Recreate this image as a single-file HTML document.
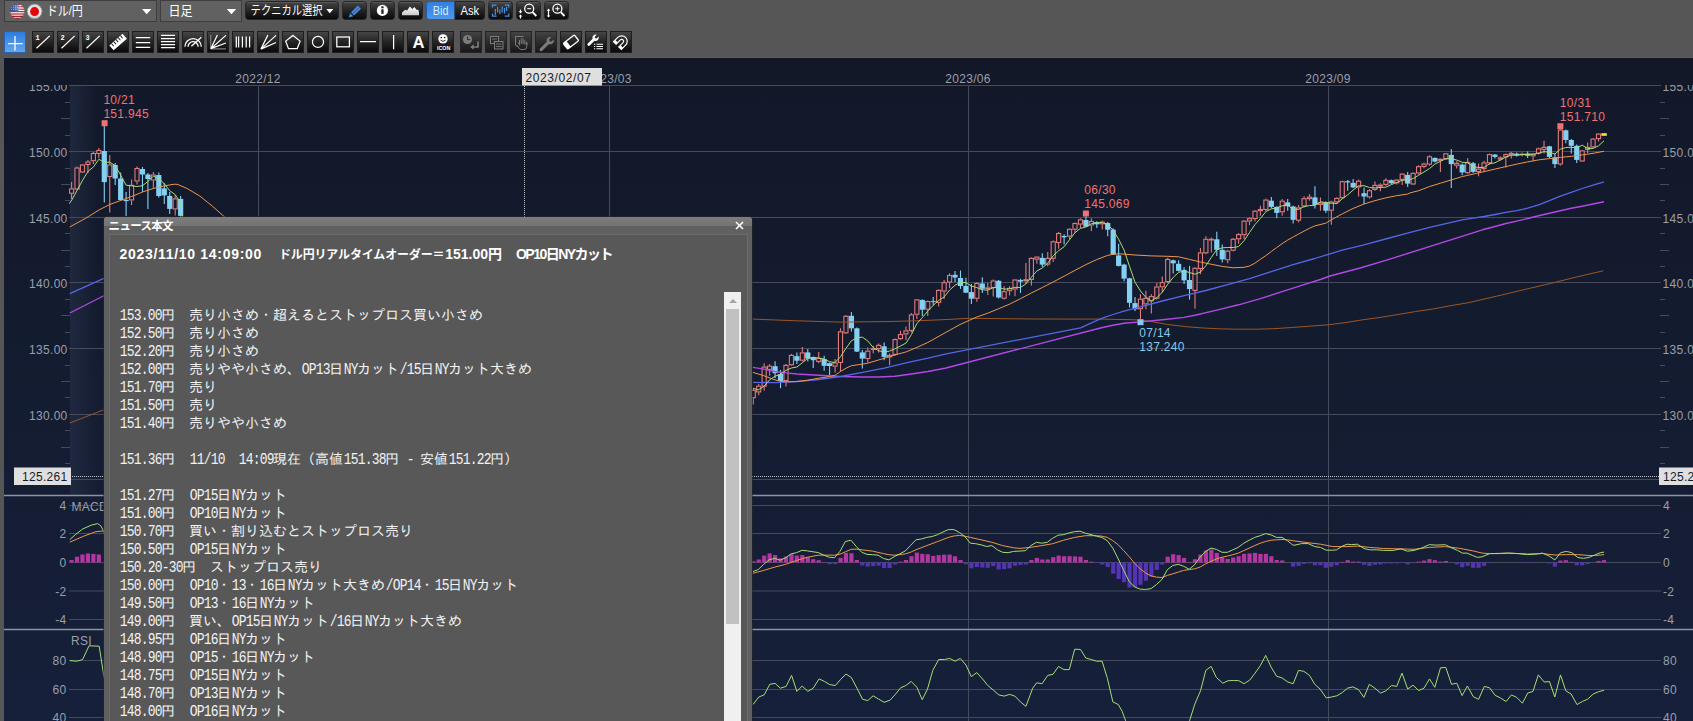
<!DOCTYPE html>
<html lang="ja"><head><meta charset="utf-8"><title>ドル/円 チャート</title>
<style>
html,body{margin:0;padding:0}
body{width:1693px;height:721px;overflow:hidden;background:#565656;position:relative;font-family:"Liberation Sans","Noto Sans CJK JP",sans-serif}
#chartbg{position:absolute;left:4px;top:58px;width:1689px;height:663px;background:linear-gradient(#121828,#16203a)}
#topline{position:absolute;left:4px;top:56.5px;width:1689px;height:1.5px;background:#5c5e5e}
#chart{position:absolute;left:0;top:0}
.ax{font-family:"Liberation Sans",sans-serif;font-size:12px;letter-spacing:.3px}
#pop{position:absolute;left:104px;top:217px;width:648px;height:520px;background:#606060;border-radius:3px 3px 0 0;box-shadow:0 0 0 1px rgba(40,40,40,.55)}
#pop .tb{position:absolute;left:0;top:0;width:100%;height:9px;background:linear-gradient(#7d7d7d,#737373);border-radius:3px 3px 0 0}
#pop .tt{position:absolute;left:0;top:0;font-size:11.5px;font-weight:bold;fill:#fff}
#pop .x{position:absolute;left:631px;top:4px}
#pop .in{position:absolute;left:5px;top:17px;width:639px;height:520px;background:#585858;border:1px solid #6a6a6a;box-sizing:border-box}
#pop .hd{position:absolute;left:15px;top:29px;font-weight:bold;fill:#fff}
#pop .h1{font-size:14px}#pop .h1,#pop .h2{font-family:"Liberation Sans","Noto Sans CJK JP",sans-serif}#pop .h2{font-size:12px}
#pop .bd{position:absolute;left:15px;top:89.5px;color:#f2f2f2;font-family:"Liberation Mono","IPAGothic",monospace;font-size:14px}
#pop .ln{height:18px;line-height:18px;white-space:pre}
#pop .a{font-size:13px;letter-spacing:-.8px;display:inline-block;transform:translateX(.7px) scaleY(1.2);transform-origin:0 77%}
#sb{position:absolute;left:620px;top:75px;width:17px;height:450px;background:#f0f0f0}
#sb .th{position:absolute;left:1.7px;top:17px;width:13.4px;height:314.5px;background:#c1c1c1}
#sb .up{position:absolute;left:4.5px;top:6.5px;width:0;height:0;border-left:4px solid transparent;border-right:4px solid transparent;border-bottom:4px solid #a3a3a3}
</style></head><body>
<svg id="tbar" width="1693" height="58" viewBox="0 0 1693 58" style="position:absolute;left:0;top:0">
<defs>
<linearGradient id="gD" x1="0" y1="0" x2="0" y2="1"><stop offset="0" stop-color="#474747"/><stop offset=".5" stop-color="#242424"/><stop offset="1" stop-color="#080808"/></linearGradient>
<linearGradient id="gX" x1="0" y1="0" x2="0" y2="1"><stop offset="0" stop-color="#444"/><stop offset=".5" stop-color="#2c2c2c"/><stop offset="1" stop-color="#171717"/></linearGradient>
<linearGradient id="gB" x1="0" y1="0" x2="0" y2="1"><stop offset="0" stop-color="#2a7be0"/><stop offset="1" stop-color="#66a6ea"/></linearGradient>
<linearGradient id="gB2" x1="0" y1="0" x2="0" y2="1"><stop offset="0" stop-color="#2f7fe2"/><stop offset="1" stop-color="#4f97e8"/></linearGradient>
<linearGradient id="gJ" x1="0" y1="0" x2="0" y2="1"><stop offset="0" stop-color="#d6d6d6"/><stop offset=".55" stop-color="#f4f4f4"/><stop offset="1" stop-color="#c4c4c4"/></linearGradient>
<linearGradient id="gM" x1="0" y1="0" x2="0" y2="1"><stop offset="0" stop-color="#fff"/><stop offset="1" stop-color="#c8c8c8"/></linearGradient>
<radialGradient id="gU" cx=".5" cy=".25" r=".7"><stop offset="0" stop-color="#fff" stop-opacity=".35"/><stop offset=".55" stop-color="#fff" stop-opacity="0"/><stop offset="1" stop-color="#000" stop-opacity=".38"/></radialGradient>
<clipPath id="cU"><circle cx="17.3" cy="11.4" r="7.6"/></clipPath>
</defs>
<rect x="4.5" y="0.5" width="152" height="21" fill="#616161" stroke="#3e3e3e"/>
<rect x="160.5" y="0.5" width="81" height="21" fill="#616161" stroke="#3e3e3e"/>
<path d="M142 9h9.4l-4.7 5.2z" fill="#fff"/><path d="M226.8 9h9.4l-4.7 5.2z" fill="#fff"/>
<g clip-path="url(#cU)"><rect x="9" y="3" width="17" height="17" fill="#fff"/>
<rect x="9" y="3.80" width="17" height="1.2" fill="#c01828"/>
<rect x="9" y="6.20" width="17" height="1.2" fill="#c01828"/>
<rect x="9" y="8.60" width="17" height="1.2" fill="#c01828"/>
<rect x="9" y="11.00" width="17" height="1.2" fill="#c01828"/>
<rect x="9" y="13.40" width="17" height="1.2" fill="#c01828"/>
<rect x="9" y="15.80" width="17" height="1.2" fill="#c01828"/>
<rect x="9" y="18.20" width="17" height="1.2" fill="#c01828"/>
<rect x="9" y="3" width="9.5" height="8.4" fill="#34509c"/>
<circle cx="11.5" cy="5.2" r=".45" fill="#dfe6f5"/>
<circle cx="13.5" cy="5.2" r=".45" fill="#dfe6f5"/>
<circle cx="15.5" cy="5.2" r=".45" fill="#dfe6f5"/>
<circle cx="17.3" cy="5.2" r=".45" fill="#dfe6f5"/>
<circle cx="11.5" cy="7.2" r=".45" fill="#dfe6f5"/>
<circle cx="13.5" cy="7.2" r=".45" fill="#dfe6f5"/>
<circle cx="15.5" cy="7.2" r=".45" fill="#dfe6f5"/>
<circle cx="17.3" cy="7.2" r=".45" fill="#dfe6f5"/>
<circle cx="11.5" cy="9.2" r=".45" fill="#dfe6f5"/>
<circle cx="13.5" cy="9.2" r=".45" fill="#dfe6f5"/>
<circle cx="15.5" cy="9.2" r=".45" fill="#dfe6f5"/>
<circle cx="17.3" cy="9.2" r=".45" fill="#dfe6f5"/>
<circle cx="17.3" cy="11.4" r="7.6" fill="url(#gU)"/></g><circle cx="17.3" cy="11.4" r="7.5" fill="none" stroke="#3a3a3a" stroke-opacity=".5" stroke-width=".7"/>
<circle cx="34.6" cy="11.4" r="7.4" fill="url(#gJ)" stroke="#8c8c8c" stroke-width=".9"/><circle cx="34.6" cy="11.6" r="4.5" fill="#e00808"/>
<text x="46.8" y="14.6" fill="#fff" style="font-family:'Liberation Sans','Noto Sans CJK JP',sans-serif;font-size:13px" textLength="36" lengthAdjust="spacingAndGlyphs">ドル/円</text>
<text x="168.4" y="14.6" fill="#fff" style="font-family:'Liberation Sans','Noto Sans CJK JP',sans-serif;font-size:13px" textLength="24" lengthAdjust="spacingAndGlyphs">日足</text>
<rect x="245.5" y="1.5" width="93.0" height="18.0" rx="3" fill="url(#gD)" stroke="#262626"/>
<line x1="247.3" y1="2.5" x2="336.7" y2="2.5" stroke="#6a6a6a" stroke-opacity=".55"/>
<text x="250.6" y="15.2" fill="#fff" style="font-family:'Liberation Sans','Noto Sans CJK JP',sans-serif;font-size:12.5px" textLength="72" lengthAdjust="spacingAndGlyphs">テクニカル選択</text>
<path d="M326.3 9h7l-3.5 4.2z" fill="#fff"/>
<rect x="342.5" y="1.5" width="24.0" height="18.0" rx="3" fill="url(#gD)" stroke="#262626"/>
<line x1="344.3" y1="2.5" x2="364.7" y2="2.5" stroke="#6a6a6a" stroke-opacity=".55"/>
<rect x="370.5" y="1.5" width="24.0" height="18.0" rx="3" fill="url(#gD)" stroke="#262626"/>
<line x1="372.3" y1="2.5" x2="392.7" y2="2.5" stroke="#6a6a6a" stroke-opacity=".55"/>
<rect x="398.5" y="1.5" width="24.0" height="18.0" rx="3" fill="url(#gD)" stroke="#262626"/>
<line x1="400.3" y1="2.5" x2="420.7" y2="2.5" stroke="#6a6a6a" stroke-opacity=".55"/>
<g fill="#4a8ee2"><path d="M351 12.400l6.900-6.800 3 3.100-6.900 6.800z"/><path d="M350.200 13.300l2.900 3-4.400 1.300z"/></g><path d="M352.600 13.900l6.900-6.800" stroke="#173a72" stroke-width=".8" fill="none"/>
<circle cx="382.4" cy="10.4" r="5.6" fill="#fff"/><rect x="381.3" y="9.3" width="2.3" height="4.6" fill="#222"/><rect x="381.3" y="6.3" width="2.3" height="2" fill="#222"/>
<path d="M402 15.200v-2.800l3.200-2.600 1.800.8 2.900-4.200 2.400 2.600 2-1.900 2.600 3 1.300-.5 .8 2.600v3z" fill="url(#gM)"/>
<path d="M429.5 1.5h25.5v18h-25.5a3 3 0 0 1-3-3v-12a3 3 0 0 1 3-3z" fill="url(#gB2)" stroke="#1f5db4"/>
<path d="M455 1.5h26.5a3 3 0 0 1 3 3v12a3 3 0 0 1-3 3h-26.5z" fill="url(#gD)" stroke="#262626"/>
<text x="432.8" y="15" fill="#d6ebff" style="font-family:'Liberation Sans','Noto Sans CJK JP',sans-serif;font-size:12px" textLength="15.6" lengthAdjust="spacingAndGlyphs">Bid</text>
<text x="460.5" y="15" fill="#fff" style="font-family:'Liberation Sans','Noto Sans CJK JP',sans-serif;font-size:12px" textLength="18.6" lengthAdjust="spacingAndGlyphs">Ask</text>
<rect x="488.5" y="1.5" width="24.0" height="18.0" rx="3" fill="url(#gD)" stroke="#262626"/>
<line x1="490.3" y1="2.5" x2="510.7" y2="2.5" stroke="#6a6a6a" stroke-opacity=".55"/>
<rect x="516.5" y="1.5" width="24.0" height="18.0" rx="3" fill="url(#gD)" stroke="#262626"/>
<line x1="518.3" y1="2.5" x2="538.7" y2="2.5" stroke="#6a6a6a" stroke-opacity=".55"/>
<rect x="544.5" y="1.5" width="24.0" height="18.0" rx="3" fill="url(#gD)" stroke="#262626"/>
<line x1="546.3" y1="2.5" x2="566.7" y2="2.5" stroke="#6a6a6a" stroke-opacity=".55"/>
<g stroke="#4a8fe2" fill="none" stroke-width="1.2"><path d="M492.5 7.5v-2.3h4M508.8 7.5v-2.3h-4M492.5 13.5v2.6h4M508.8 13.5v2.6h-4"/><path d="M495.3 9v6M497.6 7v5.5M499.9 9.5v4.5M502.2 6.5v6M504.5 8v5.5M506.6 7v4"/></g>
<g stroke="#fff" fill="none" stroke-width="1.3"><circle cx="529.2" cy="8.700" r="4.500"/><path d="M532.600 12.200l3.700 3.800" stroke-width="1.900"/><path d="M527.200 8.700h4" stroke-width="1"/></g>
<path d="M520.5 13.400l-1.900-2.200h1.300v-1.800h1.200v1.800h1.300zM520.500 14.400l1.900 2.200h-1.300v1.800h-1.200v-1.800h-1.300z" fill="#fff"/>
<g stroke="#fff" fill="none" stroke-width="1.3"><circle cx="557.4" cy="8.700" r="4.500"/><path d="M560.800 12.200l3.700 3.800" stroke-width="1.900"/><path d="M555.300 8.700h4.200M557.400 6.600v4.200" stroke-width="1"/></g>
<path d="M548.5 8.6l1.9 2.2h-1.3v4.6h1.3l-1.9 2.2-1.9-2.2h1.3v-4.6h-1.3z" fill="#fff"/>
<rect x="4.5" y="31.5" width="21" height="21.0" fill="url(#gB)" stroke="#2a62b4"/>
<rect x="32.5" y="31.5" width="21" height="21.0" fill="url(#gD)" stroke="#1e1e1e"/>
<rect x="57.5" y="31.5" width="21" height="21.0" fill="url(#gD)" stroke="#1e1e1e"/>
<rect x="82.5" y="31.5" width="21" height="21.0" fill="url(#gD)" stroke="#1e1e1e"/>
<rect x="107.5" y="31.5" width="21" height="21.0" fill="url(#gD)" stroke="#1e1e1e"/>
<rect x="132.5" y="31.5" width="21" height="21.0" fill="url(#gD)" stroke="#1e1e1e"/>
<rect x="157.5" y="31.5" width="21" height="21.0" fill="url(#gD)" stroke="#1e1e1e"/>
<rect x="182.5" y="31.5" width="21" height="21.0" fill="url(#gD)" stroke="#1e1e1e"/>
<rect x="207.5" y="31.5" width="21" height="21.0" fill="url(#gD)" stroke="#1e1e1e"/>
<rect x="232.5" y="31.5" width="21" height="21.0" fill="url(#gD)" stroke="#1e1e1e"/>
<rect x="257.5" y="31.5" width="21" height="21.0" fill="url(#gD)" stroke="#1e1e1e"/>
<rect x="282.5" y="31.5" width="21" height="21.0" fill="url(#gD)" stroke="#1e1e1e"/>
<rect x="307.5" y="31.5" width="21" height="21.0" fill="url(#gD)" stroke="#1e1e1e"/>
<rect x="332.5" y="31.5" width="21" height="21.0" fill="url(#gD)" stroke="#1e1e1e"/>
<rect x="357.5" y="31.5" width="21" height="21.0" fill="url(#gD)" stroke="#1e1e1e"/>
<rect x="382.5" y="31.5" width="21" height="21.0" fill="url(#gD)" stroke="#1e1e1e"/>
<rect x="407.5" y="31.5" width="21" height="21.0" fill="url(#gD)" stroke="#1e1e1e"/>
<rect x="432.5" y="31.5" width="21" height="21.0" fill="url(#gD)" stroke="#1e1e1e"/>
<rect x="460.5" y="31.5" width="21" height="21.0" fill="url(#gX)" stroke="#242424"/>
<rect x="485.5" y="31.5" width="21" height="21.0" fill="url(#gX)" stroke="#242424"/>
<rect x="510.5" y="31.5" width="21" height="21.0" fill="url(#gX)" stroke="#242424"/>
<rect x="535.5" y="31.5" width="21" height="21.0" fill="url(#gX)" stroke="#242424"/>
<rect x="560.5" y="31.5" width="21" height="21.0" fill="url(#gD)" stroke="#1e1e1e"/>
<rect x="585.5" y="31.5" width="21" height="21.0" fill="url(#gD)" stroke="#1e1e1e"/>
<rect x="610.5" y="31.5" width="21" height="21.0" fill="url(#gD)" stroke="#1e1e1e"/>
<path d="M8 43.6h14.6M15 36v14.5" stroke="#fff" fill="none" stroke-width="1.25" stroke-width="1.3"/>
<path d="M36.5 48.3l13.2-12.4" stroke="#fff" fill="none" stroke-width="1.25" stroke-width="1.5"/>
<text x="35.4" y="39.6" fill="#fff" style="font-family:'Liberation Mono',monospace;font-size:7px;font-weight:bold">1</text>
<path d="M61.5 48.3l13.2-12.4" stroke="#fff" fill="none" stroke-width="1.25" stroke-width="1.5"/>
<text x="60.4" y="39.6" fill="#fff" style="font-family:'Liberation Mono',monospace;font-size:7px;font-weight:bold">2</text>
<path d="M86.5 48.3l13.2-12.4" stroke="#fff" fill="none" stroke-width="1.25" stroke-width="1.5"/>
<text x="85.4" y="39.6" fill="#fff" style="font-family:'Liberation Mono',monospace;font-size:7px;font-weight:bold">3</text>
<g transform="translate(118.1 42.1) rotate(-41)"><rect x="-8.8" y="-3.3" width="17.6" height="6.6" fill="#fff"/><path d="M-6 -3.3v3.4M-3 -3.3v3.4M0 -3.3v3.4M3 -3.3v3.4M6 -3.3v3.4" stroke="#222" stroke-width="1"/></g>
<path d="M135.8 37.5h14.4M135.8 42.5h14.4M135.8 47.4h14.4" stroke="#fff" fill="none" stroke-width="1.25" stroke-width="1.3"/>
<path d="M161 35.4h14M161 38.5h14M161 41.6h14M161 44.6h14M161 47.6h14" stroke="#fff" fill="none" stroke-width="1.25" stroke-width="1.2"/>
<path d="M184.9 46.8a8.2 8.2 0 0 1 16.4 0M188 46.8a5.1 5.1 0 0 1 10.2 0M191.4 46.3l9.9-9" stroke="#fff" fill="none" stroke-width="1.25"/>
<path d="M210.8 35v13.9h15.2" stroke="#9a9a9a" fill="none" stroke-width="1"/><path d="M210.8 48.7l6.6-13.7M210.8 48.7l15.1-13.3M210.8 48.7l15.1-5.7" stroke="#fff" fill="none" stroke-width="1.25"/>
<path d="M236.3 36.4v11M238.6 36.4v11M242.4 36.4v11M246.2 36.4v11M249.6 36.4v11" stroke="#fff" fill="none" stroke-width="1.25" stroke-width="1.2"/>
<path d="M260.9 49.1l7-14.1M260.9 49.1l15.1-13.7M260.9 49.1l15.1-6.6" stroke="#fff" fill="none" stroke-width="1.25"/>
<path d="M293 35.4l7.1 5.7-2.9 7.6h-8.7l-2.8-7.6z" stroke="#fff" fill="none" stroke-width="1.25"/>
<circle cx="318" cy="41.9" r="5.55" stroke="#fff" fill="none" stroke-width="1.25"/>
<rect x="336.8" y="37" width="12.6" height="9.8" stroke="#fff" fill="none" stroke-width="1.25" stroke-width="1.3"/>
<path d="M360 41.5h16M393.6 35v14.2" stroke="#fff" fill="none" stroke-width="1.25" stroke-width="1.3"/>
<text x="412.4" y="48.3" fill="#fff" style="font-family:'Liberation Sans',sans-serif;font-size:16px;font-weight:bold" textLength="12" lengthAdjust="spacingAndGlyphs">A</text>
<circle cx="443" cy="38.9" r="4.7" fill="#fff"/><circle cx="441.3" cy="37.6" r=".8" fill="#111"/><circle cx="444.7" cy="37.6" r=".8" fill="#111"/><path d="M440.5 40.2q2.5 2.4 5 0" stroke="#111" fill="none" stroke-width=".9"/>
<text x="437" y="50" fill="#fff" style="font-family:'Liberation Sans',sans-serif;font-size:5.6px;font-weight:bold" textLength="13.3" lengthAdjust="spacingAndGlyphs">ICON</text>
<circle cx="467.5" cy="39.5" r="4.6" fill="#7c7c7c"/><path d="M467.5 36.6v3h2.6" stroke="#2a2a2a" fill="none" stroke-width="1"/><path d="M478 41.500v5.500h-5" stroke="#7c7c7c" fill="none" stroke-width="1.700"/><path d="M473.600 44.200v5.600l-3.400-2.800z" fill="#7c7c7c"/>
<g stroke="#7c7c7c" fill="#2a2a2a" stroke-width="1"><rect x="490.5" y="36.5" width="8" height="7"/><rect x="494.5" y="41.5" width="8.5" height="7.5"/></g><path d="M492 39h5M496 44h5.5M496 46.5h5.5" stroke="#7c7c7c" stroke-width=".9"/>
<g stroke="#7c7c7c" fill="none" stroke-width="1"><path d="M515.5 36.5h8M515.5 36.5v8.5l2 2"/><path d="M519.5 45.5v-5.5M521.3 44v-5.5M523.1 44v-5.5M524.9 44.5v-4.5M526.7 45v-3M519.5 44l-1.8-1.5M526.8 42v4.500q0 3-3 3h-2.500q-1.500 0-2.500-1.500l-2-3"/></g>
<path d="M540 48.600l6.800-6.800a3.600 3.600 0 0 1 4.600-4.600l-2.300 2.300 .5 1.700 1.700 .5 2.300-2.300a3.600 3.600 0 0 1-4.600 4.600l-6.800 6.800a1.500 1.500 0 0 1-2.200-2.200z" fill="#7c7c7c"/>
<g transform="translate(571 42) rotate(-38)"><rect x="-7" y="-3.600" width="14" height="7.200" rx="1" fill="none" stroke="#fff" stroke-width="1.300"/><rect x="-7" y="-3.600" width="4" height="7.200" fill="#fff"/></g>
<path d="M587.800 43.600l4.800-4.800a3.200 3.200 0 0 1 4.100-4.100l-2 2 .4 1.500 1.500 .4 2-2a3.200 3.200 0 0 1-4.100 4.100l-4.800 4.800a1.300 1.300 0 0 1-1.900-1.900z" fill="#fff"/><path d="M596.500 44.300h6.500M596.500 46.500h6.500M596.500 48.700h6.500" stroke="#fff" stroke-width="1.100"/><path d="M594 44.300h1.200M594 46.500h1.200M594 48.700h1.200" stroke="#fff" stroke-width="1.100"/>
<g transform="translate(621 42) rotate(45)"><path d="M-5.500 5v-6a5.500 5.500 0 0 1 11 0v6h-3.600v-6a1.900 1.900 0 0 0-3.800 0v6z" fill="none" stroke="#fff" stroke-width="1.200"/><rect x="-5.500" y="2.600" width="3.600" height="2.400" fill="#fff"/><rect x="1.900" y="2.600" width="3.600" height="2.400" fill="#fff"/></g>
</svg>
<div id="topline"></div>
<div id="chartbg"></div>
<svg id="chart" width="1693" height="721" viewBox="0 0 1693 721"><defs><clipPath id="cm"><rect x="69" y="86" width="1591" height="409"/></clipPath><clipPath id="cr"><rect x="69" y="630" width="1591" height="91"/></clipPath><clipPath id="ct"><rect x="0" y="85" width="1693" height="40"/></clipPath><linearGradient id="lg" x1="0" x2="1" y1="0" y2="0"><stop offset="0" stop-color="#27314a"/><stop offset="1" stop-color="#27314a" stop-opacity="0"/></linearGradient></defs>
<rect x="70" y="86" width="28" height="409" fill="url(#lg)" opacity="0.6"/>
<line x1="69" y1="85.5" x2="1661" y2="85.5" stroke="#454b5c"/>
<line x1="69" y1="151.5" x2="1661" y2="151.5" stroke="#454b5c"/>
<line x1="69" y1="217.5" x2="1661" y2="217.5" stroke="#454b5c"/>
<line x1="69" y1="282.5" x2="1661" y2="282.5" stroke="#454b5c"/>
<line x1="69" y1="348.5" x2="1661" y2="348.5" stroke="#454b5c"/>
<line x1="69" y1="414.5" x2="1661" y2="414.5" stroke="#454b5c"/>
<line x1="69" y1="479.5" x2="1661" y2="479.5" stroke="#454b5c"/>
<line x1="65" y1="102.5" x2="70" y2="102.5" stroke="#454b5c"/>
<line x1="1660" y1="102.5" x2="1665" y2="102.5" stroke="#454b5c"/>
<line x1="61" y1="118.5" x2="70" y2="118.5" stroke="#454b5c"/>
<line x1="1660" y1="118.5" x2="1669" y2="118.5" stroke="#454b5c"/>
<line x1="65" y1="135.5" x2="70" y2="135.5" stroke="#454b5c"/>
<line x1="1660" y1="135.5" x2="1665" y2="135.5" stroke="#454b5c"/>
<line x1="65" y1="168.5" x2="70" y2="168.5" stroke="#454b5c"/>
<line x1="1660" y1="168.5" x2="1665" y2="168.5" stroke="#454b5c"/>
<line x1="61" y1="184.5" x2="70" y2="184.5" stroke="#454b5c"/>
<line x1="1660" y1="184.5" x2="1669" y2="184.5" stroke="#454b5c"/>
<line x1="65" y1="200.5" x2="70" y2="200.5" stroke="#454b5c"/>
<line x1="1660" y1="200.5" x2="1665" y2="200.5" stroke="#454b5c"/>
<line x1="65" y1="233.5" x2="70" y2="233.5" stroke="#454b5c"/>
<line x1="1660" y1="233.5" x2="1665" y2="233.5" stroke="#454b5c"/>
<line x1="61" y1="250.5" x2="70" y2="250.5" stroke="#454b5c"/>
<line x1="1660" y1="250.5" x2="1669" y2="250.5" stroke="#454b5c"/>
<line x1="65" y1="266.5" x2="70" y2="266.5" stroke="#454b5c"/>
<line x1="1660" y1="266.5" x2="1665" y2="266.5" stroke="#454b5c"/>
<line x1="65" y1="299.5" x2="70" y2="299.5" stroke="#454b5c"/>
<line x1="1660" y1="299.5" x2="1665" y2="299.5" stroke="#454b5c"/>
<line x1="61" y1="315.5" x2="70" y2="315.5" stroke="#454b5c"/>
<line x1="1660" y1="315.5" x2="1669" y2="315.5" stroke="#454b5c"/>
<line x1="65" y1="332.5" x2="70" y2="332.5" stroke="#454b5c"/>
<line x1="1660" y1="332.5" x2="1665" y2="332.5" stroke="#454b5c"/>
<line x1="65" y1="365.5" x2="70" y2="365.5" stroke="#454b5c"/>
<line x1="1660" y1="365.5" x2="1665" y2="365.5" stroke="#454b5c"/>
<line x1="61" y1="381.5" x2="70" y2="381.5" stroke="#454b5c"/>
<line x1="1660" y1="381.5" x2="1669" y2="381.5" stroke="#454b5c"/>
<line x1="65" y1="397.5" x2="70" y2="397.5" stroke="#454b5c"/>
<line x1="1660" y1="397.5" x2="1665" y2="397.5" stroke="#454b5c"/>
<line x1="65" y1="430.5" x2="70" y2="430.5" stroke="#454b5c"/>
<line x1="1660" y1="430.5" x2="1665" y2="430.5" stroke="#454b5c"/>
<line x1="61" y1="447.5" x2="70" y2="447.5" stroke="#454b5c"/>
<line x1="1660" y1="447.5" x2="1669" y2="447.5" stroke="#454b5c"/>
<line x1="65" y1="463.5" x2="70" y2="463.5" stroke="#454b5c"/>
<line x1="1660" y1="463.5" x2="1665" y2="463.5" stroke="#454b5c"/>
<line x1="258.5" y1="86" x2="258.5" y2="721" stroke="#454b5c"/>
<line x1="609.5" y1="86" x2="609.5" y2="721" stroke="#454b5c"/>
<line x1="968.5" y1="86" x2="968.5" y2="721" stroke="#454b5c"/>
<line x1="1328.5" y1="86" x2="1328.5" y2="721" stroke="#454b5c"/>
<line x1="69" y1="505.5" x2="1661" y2="505.5" stroke="#454b5c"/>
<line x1="69" y1="533.5" x2="1661" y2="533.5" stroke="#454b5c"/>
<line x1="69" y1="562.5" x2="1661" y2="562.5" stroke="#454b5c"/>
<line x1="69" y1="591.0" x2="1661" y2="591.0" stroke="#454b5c"/>
<line x1="69" y1="619.5" x2="1661" y2="619.5" stroke="#454b5c"/>
<line x1="69" y1="660.5" x2="1661" y2="660.5" stroke="#454b5c"/>
<line x1="69" y1="689.5" x2="1661" y2="689.5" stroke="#454b5c"/>
<line x1="69" y1="717.5" x2="1661" y2="717.5" stroke="#454b5c"/>
<line x1="4" y1="495.5" x2="1693" y2="495.5" stroke="#8e939e" stroke-width="1.4"/>
<line x1="4" y1="629.5" x2="1693" y2="629.5" stroke="#8e939e" stroke-width="1.4"/>
<line x1="524.5" y1="86" x2="524.5" y2="721" stroke="#c0c4cc" stroke-dasharray="1 1"/>
<line x1="70" y1="476.5" x2="1659" y2="476.5" stroke="#c0c4cc" stroke-dasharray="1 1"/>
<g clip-path="url(#cm)">
<line x1="71.57" y1="181.9" x2="71.57" y2="188.4" stroke="#e27b7b" stroke-width="1.1"/>
<line x1="71.57" y1="193.7" x2="71.57" y2="198.9" stroke="#e27b7b" stroke-width="1.1"/>
<rect x="69.52" y="188.9" width="4.1" height="4.3" fill="#131b2f" stroke="#e27b7b" stroke-width="1.1"/>
<line x1="77.02" y1="166.5" x2="77.02" y2="167.5" stroke="#e27b7b" stroke-width="1.1"/>
<line x1="77.02" y1="189.4" x2="77.02" y2="189.9" stroke="#e27b7b" stroke-width="1.1"/>
<rect x="74.97" y="168.0" width="4.1" height="21.0" fill="#131b2f" stroke="#e27b7b" stroke-width="1.1"/>
<line x1="82.47" y1="164.0" x2="82.47" y2="164.5" stroke="#e27b7b" stroke-width="1.1"/>
<line x1="82.47" y1="172.5" x2="82.47" y2="173.0" stroke="#e27b7b" stroke-width="1.1"/>
<rect x="80.42" y="165.0" width="4.1" height="7.0" fill="#131b2f" stroke="#e27b7b" stroke-width="1.1"/>
<line x1="87.93" y1="160.0" x2="87.93" y2="161.5" stroke="#e27b7b" stroke-width="1.1"/>
<line x1="87.93" y1="165.0" x2="87.93" y2="173.0" stroke="#e27b7b" stroke-width="1.1"/>
<rect x="85.88" y="162.0" width="4.1" height="2.5" fill="#131b2f" stroke="#e27b7b" stroke-width="1.1"/>
<line x1="93.38" y1="152.0" x2="93.38" y2="153.0" stroke="#e27b7b" stroke-width="1.1"/>
<line x1="93.38" y1="161.2" x2="93.38" y2="164.0" stroke="#e27b7b" stroke-width="1.1"/>
<rect x="91.33" y="153.5" width="4.1" height="7.2" fill="#131b2f" stroke="#e27b7b" stroke-width="1.1"/>
<line x1="98.83" y1="148.0" x2="98.83" y2="150.0" stroke="#e27b7b" stroke-width="1.1"/>
<line x1="98.83" y1="154.0" x2="98.83" y2="158.0" stroke="#e27b7b" stroke-width="1.1"/>
<rect x="96.78" y="150.5" width="4.1" height="3.0" fill="#131b2f" stroke="#e27b7b" stroke-width="1.1"/>
<line x1="104.29" y1="126.0" x2="104.29" y2="202.4" stroke="#84d0f3" stroke-width="1.1"/>
<rect x="101.69" y="151.0" width="5.2" height="31.1" fill="#84d0f3"/>
<line x1="109.74" y1="155.0" x2="109.74" y2="164.5" stroke="#e27b7b" stroke-width="1.1"/>
<line x1="109.74" y1="177.0" x2="109.74" y2="212.4" stroke="#e27b7b" stroke-width="1.1"/>
<rect x="107.69" y="165.0" width="4.1" height="11.5" fill="#131b2f" stroke="#e27b7b" stroke-width="1.1"/>
<line x1="115.19" y1="163.0" x2="115.19" y2="184.9" stroke="#84d0f3" stroke-width="1.1"/>
<rect x="112.59" y="165.0" width="5.2" height="13.5" fill="#84d0f3"/>
<line x1="120.65" y1="172.5" x2="120.65" y2="200.4" stroke="#84d0f3" stroke-width="1.1"/>
<rect x="118.05" y="178.5" width="5.2" height="21.5" fill="#84d0f3"/>
<line x1="126.10" y1="191.9" x2="126.10" y2="215.9" stroke="#84d0f3" stroke-width="1.1"/>
<rect x="123.50" y="199.9" width="5.2" height="1.2" fill="#84d0f3"/>
<line x1="131.56" y1="179.4" x2="131.56" y2="184.9" stroke="#e27b7b" stroke-width="1.1"/>
<line x1="131.56" y1="200.4" x2="131.56" y2="204.9" stroke="#e27b7b" stroke-width="1.1"/>
<rect x="129.51" y="185.4" width="4.1" height="14.5" fill="#131b2f" stroke="#e27b7b" stroke-width="1.1"/>
<line x1="137.01" y1="166.5" x2="137.01" y2="168.0" stroke="#e27b7b" stroke-width="1.1"/>
<line x1="137.01" y1="181.4" x2="137.01" y2="184.4" stroke="#e27b7b" stroke-width="1.1"/>
<rect x="134.96" y="168.5" width="4.1" height="12.5" fill="#131b2f" stroke="#e27b7b" stroke-width="1.1"/>
<line x1="142.46" y1="167.0" x2="142.46" y2="191.9" stroke="#84d0f3" stroke-width="1.1"/>
<rect x="139.86" y="169.0" width="5.2" height="5.5" fill="#84d0f3"/>
<line x1="147.92" y1="173.0" x2="147.92" y2="208.9" stroke="#84d0f3" stroke-width="1.1"/>
<rect x="145.32" y="174.5" width="5.2" height="4.5" fill="#84d0f3"/>
<line x1="153.37" y1="172.0" x2="153.37" y2="174.5" stroke="#e27b7b" stroke-width="1.1"/>
<line x1="153.37" y1="180.4" x2="153.37" y2="188.4" stroke="#e27b7b" stroke-width="1.1"/>
<rect x="151.32" y="175.0" width="4.1" height="5.0" fill="#131b2f" stroke="#e27b7b" stroke-width="1.1"/>
<line x1="158.82" y1="172.5" x2="158.82" y2="197.4" stroke="#84d0f3" stroke-width="1.1"/>
<rect x="156.22" y="175.0" width="5.2" height="21.0" fill="#84d0f3"/>
<line x1="164.28" y1="182.9" x2="164.28" y2="203.9" stroke="#84d0f3" stroke-width="1.1"/>
<rect x="161.68" y="188.4" width="5.2" height="7.0" fill="#84d0f3"/>
<line x1="169.73" y1="191.9" x2="169.73" y2="213.9" stroke="#84d0f3" stroke-width="1.1"/>
<rect x="167.13" y="195.9" width="5.2" height="13.0" fill="#84d0f3"/>
<line x1="175.18" y1="194.9" x2="175.18" y2="198.4" stroke="#e27b7b" stroke-width="1.1"/>
<line x1="175.18" y1="209.4" x2="175.18" y2="215.4" stroke="#e27b7b" stroke-width="1.1"/>
<rect x="173.13" y="198.9" width="4.1" height="10.0" fill="#131b2f" stroke="#e27b7b" stroke-width="1.1"/>
<line x1="180.64" y1="195.9" x2="180.64" y2="219.9" stroke="#84d0f3" stroke-width="1.1"/>
<rect x="178.04" y="198.9" width="5.2" height="17.0" fill="#84d0f3"/>
<line x1="753.25" y1="389.0" x2="753.25" y2="389.9" stroke="#e27b7b" stroke-width="1.1"/>
<line x1="753.25" y1="398.2" x2="753.25" y2="404.5" stroke="#e27b7b" stroke-width="1.1"/>
<rect x="751.20" y="390.4" width="4.1" height="7.3" fill="#131b2f" stroke="#e27b7b" stroke-width="1.1"/>
<line x1="758.71" y1="384.0" x2="758.71" y2="385.7" stroke="#e27b7b" stroke-width="1.1"/>
<line x1="758.71" y1="392.3" x2="758.71" y2="395.2" stroke="#e27b7b" stroke-width="1.1"/>
<rect x="756.66" y="386.2" width="4.1" height="5.7" fill="#131b2f" stroke="#e27b7b" stroke-width="1.1"/>
<line x1="764.16" y1="363.2" x2="764.16" y2="366.6" stroke="#e27b7b" stroke-width="1.1"/>
<line x1="764.16" y1="386.5" x2="764.16" y2="390.7" stroke="#e27b7b" stroke-width="1.1"/>
<rect x="762.11" y="367.1" width="4.1" height="19.0" fill="#131b2f" stroke="#e27b7b" stroke-width="1.1"/>
<line x1="769.61" y1="364.1" x2="769.61" y2="365.7" stroke="#e27b7b" stroke-width="1.1"/>
<line x1="769.61" y1="369.9" x2="769.61" y2="375.7" stroke="#e27b7b" stroke-width="1.1"/>
<rect x="767.56" y="366.2" width="4.1" height="3.2" fill="#131b2f" stroke="#e27b7b" stroke-width="1.1"/>
<line x1="775.07" y1="361.2" x2="775.07" y2="378.2" stroke="#84d0f3" stroke-width="1.1"/>
<rect x="772.47" y="366.2" width="5.2" height="7.0" fill="#84d0f3"/>
<line x1="780.52" y1="369.9" x2="780.52" y2="388.2" stroke="#84d0f3" stroke-width="1.1"/>
<rect x="777.92" y="374.0" width="5.2" height="7.0" fill="#84d0f3"/>
<line x1="785.98" y1="364.1" x2="785.98" y2="364.9" stroke="#e27b7b" stroke-width="1.1"/>
<line x1="785.98" y1="381.0" x2="785.98" y2="386.5" stroke="#e27b7b" stroke-width="1.1"/>
<rect x="783.93" y="365.4" width="4.1" height="15.1" fill="#131b2f" stroke="#e27b7b" stroke-width="1.1"/>
<line x1="791.43" y1="354.1" x2="791.43" y2="354.9" stroke="#e27b7b" stroke-width="1.1"/>
<line x1="791.43" y1="365.2" x2="791.43" y2="365.7" stroke="#e27b7b" stroke-width="1.1"/>
<rect x="789.38" y="355.4" width="4.1" height="9.3" fill="#131b2f" stroke="#e27b7b" stroke-width="1.1"/>
<line x1="796.88" y1="352.4" x2="796.88" y2="364.1" stroke="#84d0f3" stroke-width="1.1"/>
<rect x="794.28" y="356.2" width="5.2" height="4.5" fill="#84d0f3"/>
<line x1="802.34" y1="347.1" x2="802.34" y2="352.4" stroke="#e27b7b" stroke-width="1.1"/>
<line x1="802.34" y1="360.7" x2="802.34" y2="361.6" stroke="#e27b7b" stroke-width="1.1"/>
<rect x="800.29" y="352.9" width="4.1" height="7.3" fill="#131b2f" stroke="#e27b7b" stroke-width="1.1"/>
<line x1="807.79" y1="349.1" x2="807.79" y2="361.6" stroke="#84d0f3" stroke-width="1.1"/>
<rect x="805.19" y="352.4" width="5.2" height="6.2" fill="#84d0f3"/>
<line x1="813.24" y1="356.6" x2="813.24" y2="367.9" stroke="#84d0f3" stroke-width="1.1"/>
<rect x="810.64" y="357.4" width="5.2" height="2.8" fill="#84d0f3"/>
<line x1="818.70" y1="351.9" x2="818.70" y2="357.9" stroke="#e27b7b" stroke-width="1.1"/>
<line x1="818.70" y1="361.9" x2="818.70" y2="363.2" stroke="#e27b7b" stroke-width="1.1"/>
<rect x="816.65" y="358.4" width="4.1" height="3.0" fill="#131b2f" stroke="#e27b7b" stroke-width="1.1"/>
<line x1="824.15" y1="355.7" x2="824.15" y2="370.7" stroke="#84d0f3" stroke-width="1.1"/>
<rect x="821.55" y="359.1" width="5.2" height="6.7" fill="#84d0f3"/>
<line x1="829.60" y1="362.4" x2="829.60" y2="374.9" stroke="#84d0f3" stroke-width="1.1"/>
<rect x="827.00" y="363.2" width="5.2" height="2.8" fill="#84d0f3"/>
<line x1="835.06" y1="359.1" x2="835.06" y2="362.4" stroke="#e27b7b" stroke-width="1.1"/>
<line x1="835.06" y1="366.6" x2="835.06" y2="372.4" stroke="#e27b7b" stroke-width="1.1"/>
<rect x="833.01" y="362.9" width="4.1" height="3.2" fill="#131b2f" stroke="#e27b7b" stroke-width="1.1"/>
<line x1="840.51" y1="328.3" x2="840.51" y2="331.3" stroke="#e27b7b" stroke-width="1.1"/>
<line x1="840.51" y1="362.9" x2="840.51" y2="371.5" stroke="#e27b7b" stroke-width="1.1"/>
<rect x="838.46" y="331.8" width="4.1" height="30.6" fill="#131b2f" stroke="#e27b7b" stroke-width="1.1"/>
<line x1="845.96" y1="315.0" x2="845.96" y2="315.8" stroke="#e27b7b" stroke-width="1.1"/>
<line x1="845.96" y1="333.3" x2="845.96" y2="334.1" stroke="#e27b7b" stroke-width="1.1"/>
<rect x="843.91" y="316.3" width="4.1" height="16.5" fill="#131b2f" stroke="#e27b7b" stroke-width="1.1"/>
<line x1="851.42" y1="312.0" x2="851.42" y2="331.6" stroke="#84d0f3" stroke-width="1.1"/>
<rect x="848.82" y="315.8" width="5.2" height="12.5" fill="#84d0f3"/>
<line x1="856.87" y1="327.5" x2="856.87" y2="351.9" stroke="#84d0f3" stroke-width="1.1"/>
<rect x="854.27" y="328.3" width="5.2" height="23.3" fill="#84d0f3"/>
<line x1="862.32" y1="349.9" x2="862.32" y2="368.6" stroke="#84d0f3" stroke-width="1.1"/>
<rect x="859.72" y="352.4" width="5.2" height="6.2" fill="#84d0f3"/>
<line x1="867.78" y1="347.4" x2="867.78" y2="350.7" stroke="#e27b7b" stroke-width="1.1"/>
<line x1="867.78" y1="359.1" x2="867.78" y2="362.4" stroke="#e27b7b" stroke-width="1.1"/>
<rect x="865.73" y="351.2" width="4.1" height="7.3" fill="#131b2f" stroke="#e27b7b" stroke-width="1.1"/>
<line x1="873.23" y1="345.8" x2="873.23" y2="348.3" stroke="#e27b7b" stroke-width="1.1"/>
<line x1="873.23" y1="349.9" x2="873.23" y2="353.2" stroke="#e27b7b" stroke-width="1.1"/>
<rect x="871.18" y="348.8" width="4.1" height="0.7" fill="#131b2f" stroke="#e27b7b" stroke-width="1.1"/>
<line x1="878.68" y1="343.6" x2="878.68" y2="344.9" stroke="#e27b7b" stroke-width="1.1"/>
<line x1="878.68" y1="349.1" x2="878.68" y2="352.4" stroke="#e27b7b" stroke-width="1.1"/>
<rect x="876.63" y="345.4" width="4.1" height="3.2" fill="#131b2f" stroke="#e27b7b" stroke-width="1.1"/>
<line x1="884.14" y1="342.4" x2="884.14" y2="360.2" stroke="#84d0f3" stroke-width="1.1"/>
<rect x="881.54" y="346.3" width="5.2" height="10.6" fill="#84d0f3"/>
<line x1="889.59" y1="353.6" x2="889.59" y2="354.9" stroke="#e27b7b" stroke-width="1.1"/>
<line x1="889.59" y1="357.4" x2="889.59" y2="365.2" stroke="#e27b7b" stroke-width="1.1"/>
<rect x="887.54" y="355.4" width="4.1" height="1.5" fill="#131b2f" stroke="#e27b7b" stroke-width="1.1"/>
<line x1="895.04" y1="338.6" x2="895.04" y2="339.1" stroke="#e27b7b" stroke-width="1.1"/>
<line x1="895.04" y1="354.9" x2="895.04" y2="355.7" stroke="#e27b7b" stroke-width="1.1"/>
<rect x="893.00" y="339.6" width="4.1" height="14.8" fill="#131b2f" stroke="#e27b7b" stroke-width="1.1"/>
<line x1="900.50" y1="330.8" x2="900.50" y2="334.1" stroke="#e27b7b" stroke-width="1.1"/>
<line x1="900.50" y1="339.1" x2="900.50" y2="339.9" stroke="#e27b7b" stroke-width="1.1"/>
<rect x="898.45" y="334.6" width="4.1" height="4.0" fill="#131b2f" stroke="#e27b7b" stroke-width="1.1"/>
<line x1="905.95" y1="326.6" x2="905.95" y2="330.4" stroke="#e27b7b" stroke-width="1.1"/>
<line x1="905.95" y1="334.4" x2="905.95" y2="339.9" stroke="#e27b7b" stroke-width="1.1"/>
<rect x="903.90" y="330.9" width="4.1" height="3.0" fill="#131b2f" stroke="#e27b7b" stroke-width="1.1"/>
<line x1="911.41" y1="312.9" x2="911.41" y2="314.4" stroke="#e27b7b" stroke-width="1.1"/>
<line x1="911.41" y1="330.9" x2="911.41" y2="332.4" stroke="#e27b7b" stroke-width="1.1"/>
<rect x="909.36" y="314.9" width="4.1" height="15.5" fill="#131b2f" stroke="#e27b7b" stroke-width="1.1"/>
<line x1="916.86" y1="298.9" x2="916.86" y2="299.4" stroke="#e27b7b" stroke-width="1.1"/>
<line x1="916.86" y1="314.7" x2="916.86" y2="318.9" stroke="#e27b7b" stroke-width="1.1"/>
<rect x="914.81" y="299.9" width="4.1" height="14.3" fill="#131b2f" stroke="#e27b7b" stroke-width="1.1"/>
<line x1="922.31" y1="299.4" x2="922.31" y2="315.9" stroke="#84d0f3" stroke-width="1.1"/>
<rect x="919.71" y="299.9" width="5.2" height="9.8" fill="#84d0f3"/>
<line x1="927.77" y1="300.4" x2="927.77" y2="301.1" stroke="#e27b7b" stroke-width="1.1"/>
<line x1="927.77" y1="309.7" x2="927.77" y2="315.9" stroke="#e27b7b" stroke-width="1.1"/>
<rect x="925.72" y="301.6" width="4.1" height="7.6" fill="#131b2f" stroke="#e27b7b" stroke-width="1.1"/>
<line x1="933.22" y1="296.9" x2="933.22" y2="305.4" stroke="#84d0f3" stroke-width="1.1"/>
<rect x="930.62" y="301.1" width="5.2" height="1.0" fill="#84d0f3"/>
<line x1="938.67" y1="289.4" x2="938.67" y2="289.9" stroke="#e27b7b" stroke-width="1.1"/>
<line x1="938.67" y1="302.9" x2="938.67" y2="306.4" stroke="#e27b7b" stroke-width="1.1"/>
<rect x="936.62" y="290.4" width="4.1" height="12.0" fill="#131b2f" stroke="#e27b7b" stroke-width="1.1"/>
<line x1="944.13" y1="280.0" x2="944.13" y2="282.2" stroke="#e27b7b" stroke-width="1.1"/>
<line x1="944.13" y1="291.4" x2="944.13" y2="298.9" stroke="#e27b7b" stroke-width="1.1"/>
<rect x="942.08" y="282.7" width="4.1" height="8.3" fill="#131b2f" stroke="#e27b7b" stroke-width="1.1"/>
<line x1="949.58" y1="273.2" x2="949.58" y2="275.0" stroke="#e27b7b" stroke-width="1.1"/>
<line x1="949.58" y1="282.5" x2="949.58" y2="287.9" stroke="#e27b7b" stroke-width="1.1"/>
<rect x="947.53" y="275.5" width="4.1" height="6.5" fill="#131b2f" stroke="#e27b7b" stroke-width="1.1"/>
<line x1="955.03" y1="271.0" x2="955.03" y2="282.0" stroke="#84d0f3" stroke-width="1.1"/>
<rect x="952.43" y="274.8" width="5.2" height="2.7" fill="#84d0f3"/>
<line x1="960.49" y1="270.5" x2="960.49" y2="288.9" stroke="#84d0f3" stroke-width="1.1"/>
<rect x="957.89" y="278.0" width="5.2" height="8.0" fill="#84d0f3"/>
<line x1="965.94" y1="277.8" x2="965.94" y2="293.1" stroke="#84d0f3" stroke-width="1.1"/>
<rect x="963.34" y="285.9" width="5.2" height="6.8" fill="#84d0f3"/>
<line x1="971.39" y1="284.0" x2="971.39" y2="303.9" stroke="#84d0f3" stroke-width="1.1"/>
<rect x="968.79" y="292.1" width="5.2" height="6.6" fill="#84d0f3"/>
<line x1="976.85" y1="282.2" x2="976.85" y2="283.0" stroke="#e27b7b" stroke-width="1.1"/>
<line x1="976.85" y1="298.7" x2="976.85" y2="301.7" stroke="#e27b7b" stroke-width="1.1"/>
<rect x="974.80" y="283.5" width="4.1" height="14.8" fill="#131b2f" stroke="#e27b7b" stroke-width="1.1"/>
<line x1="982.30" y1="277.2" x2="982.30" y2="292.9" stroke="#84d0f3" stroke-width="1.1"/>
<rect x="979.70" y="283.5" width="5.2" height="5.3" fill="#84d0f3"/>
<line x1="987.75" y1="283.0" x2="987.75" y2="287.4" stroke="#e27b7b" stroke-width="1.1"/>
<line x1="987.75" y1="288.9" x2="987.75" y2="294.9" stroke="#e27b7b" stroke-width="1.1"/>
<rect x="985.70" y="287.9" width="4.1" height="0.5" fill="#131b2f" stroke="#e27b7b" stroke-width="1.1"/>
<line x1="993.21" y1="279.5" x2="993.21" y2="280.5" stroke="#e27b7b" stroke-width="1.1"/>
<line x1="993.21" y1="287.9" x2="993.21" y2="296.4" stroke="#e27b7b" stroke-width="1.1"/>
<rect x="991.16" y="281.0" width="4.1" height="6.5" fill="#131b2f" stroke="#e27b7b" stroke-width="1.1"/>
<line x1="998.66" y1="280.0" x2="998.66" y2="298.4" stroke="#84d0f3" stroke-width="1.1"/>
<rect x="996.06" y="280.8" width="5.2" height="16.7" fill="#84d0f3"/>
<line x1="1004.12" y1="286.2" x2="1004.12" y2="291.2" stroke="#e27b7b" stroke-width="1.1"/>
<line x1="1004.12" y1="298.7" x2="1004.12" y2="299.5" stroke="#e27b7b" stroke-width="1.1"/>
<rect x="1002.07" y="291.7" width="4.1" height="6.5" fill="#131b2f" stroke="#e27b7b" stroke-width="1.1"/>
<line x1="1009.57" y1="286.2" x2="1009.57" y2="287.9" stroke="#e27b7b" stroke-width="1.1"/>
<line x1="1009.57" y1="291.2" x2="1009.57" y2="295.4" stroke="#e27b7b" stroke-width="1.1"/>
<rect x="1007.52" y="288.4" width="4.1" height="2.3" fill="#131b2f" stroke="#e27b7b" stroke-width="1.1"/>
<line x1="1015.02" y1="279.2" x2="1015.02" y2="279.5" stroke="#e27b7b" stroke-width="1.1"/>
<line x1="1015.02" y1="289.5" x2="1015.02" y2="296.2" stroke="#e27b7b" stroke-width="1.1"/>
<rect x="1012.97" y="280.0" width="4.1" height="9.0" fill="#131b2f" stroke="#e27b7b" stroke-width="1.1"/>
<line x1="1020.48" y1="278.7" x2="1020.48" y2="292.9" stroke="#84d0f3" stroke-width="1.1"/>
<rect x="1017.88" y="279.9" width="5.2" height="1.7" fill="#84d0f3"/>
<line x1="1025.93" y1="262.9" x2="1025.93" y2="279.2" stroke="#e27b7b" stroke-width="1.1"/>
<line x1="1025.93" y1="281.2" x2="1025.93" y2="283.7" stroke="#e27b7b" stroke-width="1.1"/>
<rect x="1023.88" y="279.7" width="4.1" height="1.0" fill="#131b2f" stroke="#e27b7b" stroke-width="1.1"/>
<line x1="1031.38" y1="257.6" x2="1031.38" y2="257.9" stroke="#e27b7b" stroke-width="1.1"/>
<line x1="1031.38" y1="279.9" x2="1031.38" y2="285.4" stroke="#e27b7b" stroke-width="1.1"/>
<rect x="1029.33" y="258.4" width="4.1" height="21.0" fill="#131b2f" stroke="#e27b7b" stroke-width="1.1"/>
<line x1="1036.84" y1="256.3" x2="1036.84" y2="256.6" stroke="#e27b7b" stroke-width="1.1"/>
<line x1="1036.84" y1="259.6" x2="1036.84" y2="263.7" stroke="#e27b7b" stroke-width="1.1"/>
<rect x="1034.79" y="257.1" width="4.1" height="2.0" fill="#131b2f" stroke="#e27b7b" stroke-width="1.1"/>
<line x1="1042.29" y1="253.3" x2="1042.29" y2="267.1" stroke="#84d0f3" stroke-width="1.1"/>
<rect x="1039.69" y="257.9" width="5.2" height="6.7" fill="#84d0f3"/>
<line x1="1047.74" y1="252.1" x2="1047.74" y2="257.9" stroke="#e27b7b" stroke-width="1.1"/>
<line x1="1047.74" y1="264.6" x2="1047.74" y2="266.2" stroke="#e27b7b" stroke-width="1.1"/>
<rect x="1045.69" y="258.4" width="4.1" height="5.7" fill="#131b2f" stroke="#e27b7b" stroke-width="1.1"/>
<line x1="1053.20" y1="240.4" x2="1053.20" y2="241.3" stroke="#e27b7b" stroke-width="1.1"/>
<line x1="1053.20" y1="258.7" x2="1053.20" y2="262.1" stroke="#e27b7b" stroke-width="1.1"/>
<rect x="1051.15" y="241.8" width="4.1" height="16.5" fill="#131b2f" stroke="#e27b7b" stroke-width="1.1"/>
<line x1="1058.65" y1="232.1" x2="1058.65" y2="233.0" stroke="#e27b7b" stroke-width="1.1"/>
<line x1="1058.65" y1="242.9" x2="1058.65" y2="248.8" stroke="#e27b7b" stroke-width="1.1"/>
<rect x="1056.60" y="233.5" width="4.1" height="9.0" fill="#131b2f" stroke="#e27b7b" stroke-width="1.1"/>
<line x1="1064.10" y1="234.3" x2="1064.10" y2="244.6" stroke="#84d0f3" stroke-width="1.1"/>
<rect x="1061.50" y="236.0" width="5.2" height="1.3" fill="#84d0f3"/>
<line x1="1069.56" y1="228.3" x2="1069.56" y2="228.8" stroke="#e27b7b" stroke-width="1.1"/>
<line x1="1069.56" y1="236.6" x2="1069.56" y2="239.6" stroke="#e27b7b" stroke-width="1.1"/>
<rect x="1067.51" y="229.3" width="4.1" height="6.8" fill="#131b2f" stroke="#e27b7b" stroke-width="1.1"/>
<line x1="1075.01" y1="222.6" x2="1075.01" y2="223.0" stroke="#e27b7b" stroke-width="1.1"/>
<line x1="1075.01" y1="229.6" x2="1075.01" y2="233.0" stroke="#e27b7b" stroke-width="1.1"/>
<rect x="1072.96" y="223.5" width="4.1" height="5.7" fill="#131b2f" stroke="#e27b7b" stroke-width="1.1"/>
<line x1="1080.46" y1="218.3" x2="1080.46" y2="219.3" stroke="#e27b7b" stroke-width="1.1"/>
<line x1="1080.46" y1="224.6" x2="1080.46" y2="228.0" stroke="#e27b7b" stroke-width="1.1"/>
<rect x="1078.41" y="219.8" width="4.1" height="4.3" fill="#131b2f" stroke="#e27b7b" stroke-width="1.1"/>
<line x1="1085.92" y1="216.3" x2="1085.92" y2="227.1" stroke="#84d0f3" stroke-width="1.1"/>
<rect x="1083.32" y="220.0" width="5.2" height="6.7" fill="#84d0f3"/>
<line x1="1091.37" y1="218.3" x2="1091.37" y2="221.0" stroke="#e27b7b" stroke-width="1.1"/>
<line x1="1091.37" y1="225.5" x2="1091.37" y2="231.0" stroke="#e27b7b" stroke-width="1.1"/>
<rect x="1089.32" y="221.5" width="4.1" height="3.5" fill="#131b2f" stroke="#e27b7b" stroke-width="1.1"/>
<line x1="1096.82" y1="221.3" x2="1096.82" y2="228.0" stroke="#84d0f3" stroke-width="1.1"/>
<rect x="1094.22" y="222.1" width="5.2" height="2.2" fill="#84d0f3"/>
<line x1="1102.28" y1="220.5" x2="1102.28" y2="221.6" stroke="#e27b7b" stroke-width="1.1"/>
<line x1="1102.28" y1="224.3" x2="1102.28" y2="229.6" stroke="#e27b7b" stroke-width="1.1"/>
<rect x="1100.23" y="222.1" width="4.1" height="1.7" fill="#131b2f" stroke="#e27b7b" stroke-width="1.1"/>
<line x1="1107.73" y1="222.1" x2="1107.73" y2="236.3" stroke="#84d0f3" stroke-width="1.1"/>
<rect x="1105.13" y="223.0" width="5.2" height="6.7" fill="#84d0f3"/>
<line x1="1113.18" y1="228.3" x2="1113.18" y2="254.9" stroke="#84d0f3" stroke-width="1.1"/>
<rect x="1110.59" y="229.6" width="5.2" height="25.0" fill="#84d0f3"/>
<line x1="1118.64" y1="243.8" x2="1118.64" y2="266.6" stroke="#84d0f3" stroke-width="1.1"/>
<rect x="1116.04" y="255.4" width="5.2" height="10.5" fill="#84d0f3"/>
<line x1="1124.09" y1="263.8" x2="1124.09" y2="281.2" stroke="#84d0f3" stroke-width="1.1"/>
<rect x="1121.49" y="264.6" width="5.2" height="14.0" fill="#84d0f3"/>
<line x1="1129.55" y1="277.7" x2="1129.55" y2="307.4" stroke="#84d0f3" stroke-width="1.1"/>
<rect x="1126.95" y="278.3" width="5.2" height="24.5" fill="#84d0f3"/>
<line x1="1135.00" y1="297.0" x2="1135.00" y2="310.9" stroke="#84d0f3" stroke-width="1.1"/>
<rect x="1132.40" y="303.1" width="5.2" height="6.1" fill="#84d0f3"/>
<line x1="1140.45" y1="294.3" x2="1140.45" y2="298.7" stroke="#e27b7b" stroke-width="1.1"/>
<line x1="1140.45" y1="309.2" x2="1140.45" y2="319.1" stroke="#e27b7b" stroke-width="1.1"/>
<rect x="1138.40" y="299.2" width="4.1" height="9.5" fill="#131b2f" stroke="#e27b7b" stroke-width="1.1"/>
<line x1="1145.91" y1="290.8" x2="1145.91" y2="297.8" stroke="#e27b7b" stroke-width="1.1"/>
<line x1="1145.91" y1="304.5" x2="1145.91" y2="309.2" stroke="#e27b7b" stroke-width="1.1"/>
<rect x="1143.86" y="298.3" width="4.1" height="5.6" fill="#131b2f" stroke="#e27b7b" stroke-width="1.1"/>
<line x1="1151.36" y1="294.3" x2="1151.36" y2="296.1" stroke="#e27b7b" stroke-width="1.1"/>
<line x1="1151.36" y1="301.3" x2="1151.36" y2="313.6" stroke="#e27b7b" stroke-width="1.1"/>
<rect x="1149.31" y="296.6" width="4.1" height="4.2" fill="#131b2f" stroke="#e27b7b" stroke-width="1.1"/>
<line x1="1156.81" y1="283.0" x2="1156.81" y2="286.5" stroke="#e27b7b" stroke-width="1.1"/>
<line x1="1156.81" y1="298.7" x2="1156.81" y2="299.6" stroke="#e27b7b" stroke-width="1.1"/>
<rect x="1154.76" y="287.0" width="4.1" height="11.2" fill="#131b2f" stroke="#e27b7b" stroke-width="1.1"/>
<line x1="1162.27" y1="276.5" x2="1162.27" y2="282.1" stroke="#e27b7b" stroke-width="1.1"/>
<line x1="1162.27" y1="287.4" x2="1162.27" y2="292.6" stroke="#e27b7b" stroke-width="1.1"/>
<rect x="1160.22" y="282.6" width="4.1" height="4.2" fill="#131b2f" stroke="#e27b7b" stroke-width="1.1"/>
<line x1="1167.72" y1="257.7" x2="1167.72" y2="259.0" stroke="#e27b7b" stroke-width="1.1"/>
<line x1="1167.72" y1="282.1" x2="1167.72" y2="283.0" stroke="#e27b7b" stroke-width="1.1"/>
<rect x="1165.67" y="259.5" width="4.1" height="22.1" fill="#131b2f" stroke="#e27b7b" stroke-width="1.1"/>
<line x1="1173.17" y1="259.4" x2="1173.17" y2="273.4" stroke="#84d0f3" stroke-width="1.1"/>
<rect x="1170.57" y="260.3" width="5.2" height="3.0" fill="#84d0f3"/>
<line x1="1178.63" y1="260.3" x2="1178.63" y2="271.6" stroke="#84d0f3" stroke-width="1.1"/>
<rect x="1176.03" y="263.8" width="5.2" height="7.0" fill="#84d0f3"/>
<line x1="1184.08" y1="267.3" x2="1184.08" y2="283.9" stroke="#84d0f3" stroke-width="1.1"/>
<rect x="1181.48" y="269.9" width="5.2" height="10.5" fill="#84d0f3"/>
<line x1="1189.53" y1="266.0" x2="1189.53" y2="299.6" stroke="#84d0f3" stroke-width="1.1"/>
<rect x="1186.93" y="280.0" width="5.2" height="9.1" fill="#84d0f3"/>
<line x1="1194.99" y1="267.3" x2="1194.99" y2="267.8" stroke="#e27b7b" stroke-width="1.1"/>
<line x1="1194.99" y1="290.8" x2="1194.99" y2="308.7" stroke="#e27b7b" stroke-width="1.1"/>
<rect x="1192.94" y="268.3" width="4.1" height="22.1" fill="#131b2f" stroke="#e27b7b" stroke-width="1.1"/>
<line x1="1200.44" y1="248.0" x2="1200.44" y2="252.4" stroke="#e27b7b" stroke-width="1.1"/>
<line x1="1200.44" y1="269.0" x2="1200.44" y2="274.2" stroke="#e27b7b" stroke-width="1.1"/>
<rect x="1198.39" y="252.9" width="4.1" height="15.6" fill="#131b2f" stroke="#e27b7b" stroke-width="1.1"/>
<line x1="1205.89" y1="236.3" x2="1205.89" y2="238.8" stroke="#e27b7b" stroke-width="1.1"/>
<line x1="1205.89" y1="253.3" x2="1205.89" y2="254.2" stroke="#e27b7b" stroke-width="1.1"/>
<rect x="1203.84" y="239.3" width="4.1" height="13.5" fill="#131b2f" stroke="#e27b7b" stroke-width="1.1"/>
<line x1="1211.35" y1="237.6" x2="1211.35" y2="238.8" stroke="#e27b7b" stroke-width="1.1"/>
<line x1="1211.35" y1="240.5" x2="1211.35" y2="252.4" stroke="#e27b7b" stroke-width="1.1"/>
<rect x="1209.30" y="239.3" width="4.1" height="0.7" fill="#131b2f" stroke="#e27b7b" stroke-width="1.1"/>
<line x1="1216.80" y1="231.8" x2="1216.80" y2="255.9" stroke="#84d0f3" stroke-width="1.1"/>
<rect x="1214.20" y="239.3" width="5.2" height="10.5" fill="#84d0f3"/>
<line x1="1222.26" y1="244.5" x2="1222.26" y2="262.5" stroke="#84d0f3" stroke-width="1.1"/>
<rect x="1219.66" y="249.8" width="5.2" height="9.6" fill="#84d0f3"/>
<line x1="1227.71" y1="249.8" x2="1227.71" y2="250.7" stroke="#e27b7b" stroke-width="1.1"/>
<line x1="1227.71" y1="260.3" x2="1227.71" y2="263.2" stroke="#e27b7b" stroke-width="1.1"/>
<rect x="1225.66" y="251.2" width="4.1" height="8.6" fill="#131b2f" stroke="#e27b7b" stroke-width="1.1"/>
<line x1="1233.16" y1="238.1" x2="1233.16" y2="238.8" stroke="#e27b7b" stroke-width="1.1"/>
<line x1="1233.16" y1="250.7" x2="1233.16" y2="251.5" stroke="#e27b7b" stroke-width="1.1"/>
<rect x="1231.11" y="239.3" width="4.1" height="10.9" fill="#131b2f" stroke="#e27b7b" stroke-width="1.1"/>
<line x1="1238.62" y1="233.2" x2="1238.62" y2="234.1" stroke="#e27b7b" stroke-width="1.1"/>
<line x1="1238.62" y1="239.3" x2="1238.62" y2="243.7" stroke="#e27b7b" stroke-width="1.1"/>
<rect x="1236.57" y="234.6" width="4.1" height="4.2" fill="#131b2f" stroke="#e27b7b" stroke-width="1.1"/>
<line x1="1244.07" y1="219.9" x2="1244.07" y2="220.7" stroke="#e27b7b" stroke-width="1.1"/>
<line x1="1244.07" y1="235.2" x2="1244.07" y2="239.0" stroke="#e27b7b" stroke-width="1.1"/>
<rect x="1242.02" y="221.2" width="4.1" height="13.5" fill="#131b2f" stroke="#e27b7b" stroke-width="1.1"/>
<line x1="1249.52" y1="217.4" x2="1249.52" y2="218.2" stroke="#e27b7b" stroke-width="1.1"/>
<line x1="1249.52" y1="221.5" x2="1249.52" y2="225.2" stroke="#e27b7b" stroke-width="1.1"/>
<rect x="1247.47" y="218.7" width="4.1" height="2.3" fill="#131b2f" stroke="#e27b7b" stroke-width="1.1"/>
<line x1="1254.98" y1="209.9" x2="1254.98" y2="210.7" stroke="#e27b7b" stroke-width="1.1"/>
<line x1="1254.98" y1="219.0" x2="1254.98" y2="221.5" stroke="#e27b7b" stroke-width="1.1"/>
<rect x="1252.93" y="211.2" width="4.1" height="7.3" fill="#131b2f" stroke="#e27b7b" stroke-width="1.1"/>
<line x1="1260.43" y1="205.7" x2="1260.43" y2="209.0" stroke="#e27b7b" stroke-width="1.1"/>
<line x1="1260.43" y1="211.2" x2="1260.43" y2="215.7" stroke="#e27b7b" stroke-width="1.1"/>
<rect x="1258.38" y="209.5" width="4.1" height="1.2" fill="#131b2f" stroke="#e27b7b" stroke-width="1.1"/>
<line x1="1265.88" y1="198.6" x2="1265.88" y2="199.6" stroke="#e27b7b" stroke-width="1.1"/>
<line x1="1265.88" y1="209.9" x2="1265.88" y2="211.5" stroke="#e27b7b" stroke-width="1.1"/>
<rect x="1263.83" y="200.1" width="4.1" height="9.3" fill="#131b2f" stroke="#e27b7b" stroke-width="1.1"/>
<line x1="1271.34" y1="196.9" x2="1271.34" y2="208.2" stroke="#84d0f3" stroke-width="1.1"/>
<rect x="1268.74" y="200.7" width="5.2" height="6.2" fill="#84d0f3"/>
<line x1="1276.79" y1="206.2" x2="1276.79" y2="218.2" stroke="#84d0f3" stroke-width="1.1"/>
<rect x="1274.19" y="206.9" width="5.2" height="6.0" fill="#84d0f3"/>
<line x1="1282.24" y1="199.1" x2="1282.24" y2="200.7" stroke="#e27b7b" stroke-width="1.1"/>
<line x1="1282.24" y1="212.4" x2="1282.24" y2="215.7" stroke="#e27b7b" stroke-width="1.1"/>
<rect x="1280.19" y="201.2" width="4.1" height="10.6" fill="#131b2f" stroke="#e27b7b" stroke-width="1.1"/>
<line x1="1287.70" y1="199.1" x2="1287.70" y2="210.7" stroke="#84d0f3" stroke-width="1.1"/>
<rect x="1285.10" y="202.4" width="5.2" height="3.8" fill="#84d0f3"/>
<line x1="1293.15" y1="205.7" x2="1293.15" y2="223.5" stroke="#84d0f3" stroke-width="1.1"/>
<rect x="1290.55" y="206.5" width="5.2" height="13.3" fill="#84d0f3"/>
<line x1="1298.60" y1="204.9" x2="1298.60" y2="207.4" stroke="#e27b7b" stroke-width="1.1"/>
<line x1="1298.60" y1="220.7" x2="1298.60" y2="222.3" stroke="#e27b7b" stroke-width="1.1"/>
<rect x="1296.55" y="207.9" width="4.1" height="12.3" fill="#131b2f" stroke="#e27b7b" stroke-width="1.1"/>
<line x1="1304.06" y1="196.2" x2="1304.06" y2="198.2" stroke="#e27b7b" stroke-width="1.1"/>
<line x1="1304.06" y1="206.5" x2="1304.06" y2="207.4" stroke="#e27b7b" stroke-width="1.1"/>
<rect x="1302.01" y="198.7" width="4.1" height="7.3" fill="#131b2f" stroke="#e27b7b" stroke-width="1.1"/>
<line x1="1309.51" y1="194.1" x2="1309.51" y2="196.6" stroke="#e27b7b" stroke-width="1.1"/>
<line x1="1309.51" y1="199.1" x2="1309.51" y2="200.7" stroke="#e27b7b" stroke-width="1.1"/>
<rect x="1307.46" y="197.1" width="4.1" height="1.5" fill="#131b2f" stroke="#e27b7b" stroke-width="1.1"/>
<line x1="1314.96" y1="186.2" x2="1314.96" y2="208.5" stroke="#84d0f3" stroke-width="1.1"/>
<rect x="1312.36" y="197.4" width="5.2" height="7.5" fill="#84d0f3"/>
<line x1="1320.42" y1="197.4" x2="1320.42" y2="202.4" stroke="#e27b7b" stroke-width="1.1"/>
<line x1="1320.42" y1="204.9" x2="1320.42" y2="210.7" stroke="#e27b7b" stroke-width="1.1"/>
<rect x="1318.37" y="202.9" width="4.1" height="1.5" fill="#131b2f" stroke="#e27b7b" stroke-width="1.1"/>
<line x1="1325.87" y1="201.5" x2="1325.87" y2="212.9" stroke="#84d0f3" stroke-width="1.1"/>
<rect x="1323.27" y="202.4" width="5.2" height="8.3" fill="#84d0f3"/>
<line x1="1331.33" y1="200.7" x2="1331.33" y2="201.5" stroke="#e27b7b" stroke-width="1.1"/>
<line x1="1331.33" y1="210.7" x2="1331.33" y2="224.8" stroke="#e27b7b" stroke-width="1.1"/>
<rect x="1329.28" y="202.0" width="4.1" height="8.2" fill="#131b2f" stroke="#e27b7b" stroke-width="1.1"/>
<line x1="1336.78" y1="197.4" x2="1336.78" y2="197.9" stroke="#e27b7b" stroke-width="1.1"/>
<line x1="1336.78" y1="202.4" x2="1336.78" y2="204.0" stroke="#e27b7b" stroke-width="1.1"/>
<rect x="1334.73" y="198.4" width="4.1" height="3.5" fill="#131b2f" stroke="#e27b7b" stroke-width="1.1"/>
<line x1="1342.23" y1="180.7" x2="1342.23" y2="181.2" stroke="#e27b7b" stroke-width="1.1"/>
<line x1="1342.23" y1="198.2" x2="1342.23" y2="199.1" stroke="#e27b7b" stroke-width="1.1"/>
<rect x="1340.18" y="181.7" width="4.1" height="16.0" fill="#131b2f" stroke="#e27b7b" stroke-width="1.1"/>
<line x1="1347.69" y1="179.9" x2="1347.69" y2="190.7" stroke="#84d0f3" stroke-width="1.1"/>
<rect x="1345.09" y="181.2" width="5.2" height="1.2" fill="#84d0f3"/>
<line x1="1353.14" y1="179.1" x2="1353.14" y2="188.2" stroke="#84d0f3" stroke-width="1.1"/>
<rect x="1350.54" y="182.9" width="5.2" height="4.5" fill="#84d0f3"/>
<line x1="1358.59" y1="179.6" x2="1358.59" y2="180.7" stroke="#e27b7b" stroke-width="1.1"/>
<line x1="1358.59" y1="187.4" x2="1358.59" y2="196.6" stroke="#e27b7b" stroke-width="1.1"/>
<rect x="1356.54" y="181.2" width="4.1" height="5.7" fill="#131b2f" stroke="#e27b7b" stroke-width="1.1"/>
<line x1="1364.05" y1="187.4" x2="1364.05" y2="204.0" stroke="#84d0f3" stroke-width="1.1"/>
<rect x="1361.45" y="193.2" width="5.2" height="3.3" fill="#84d0f3"/>
<line x1="1369.50" y1="189.1" x2="1369.50" y2="190.2" stroke="#e27b7b" stroke-width="1.1"/>
<line x1="1369.50" y1="197.4" x2="1369.50" y2="198.6" stroke="#e27b7b" stroke-width="1.1"/>
<rect x="1367.45" y="190.7" width="4.1" height="6.2" fill="#131b2f" stroke="#e27b7b" stroke-width="1.1"/>
<line x1="1374.95" y1="181.6" x2="1374.95" y2="184.9" stroke="#e27b7b" stroke-width="1.1"/>
<line x1="1374.95" y1="189.9" x2="1374.95" y2="190.7" stroke="#e27b7b" stroke-width="1.1"/>
<rect x="1372.90" y="185.4" width="4.1" height="4.0" fill="#131b2f" stroke="#e27b7b" stroke-width="1.1"/>
<line x1="1380.41" y1="183.2" x2="1380.41" y2="184.6" stroke="#e27b7b" stroke-width="1.1"/>
<line x1="1380.41" y1="186.6" x2="1380.41" y2="191.2" stroke="#e27b7b" stroke-width="1.1"/>
<rect x="1378.36" y="185.1" width="4.1" height="1.0" fill="#131b2f" stroke="#e27b7b" stroke-width="1.1"/>
<line x1="1385.86" y1="178.3" x2="1385.86" y2="179.9" stroke="#e27b7b" stroke-width="1.1"/>
<line x1="1385.86" y1="184.9" x2="1385.86" y2="185.7" stroke="#e27b7b" stroke-width="1.1"/>
<rect x="1383.81" y="180.4" width="4.1" height="4.0" fill="#131b2f" stroke="#e27b7b" stroke-width="1.1"/>
<line x1="1391.31" y1="179.6" x2="1391.31" y2="184.1" stroke="#84d0f3" stroke-width="1.1"/>
<rect x="1388.71" y="180.2" width="5.2" height="3.0" fill="#84d0f3"/>
<line x1="1396.77" y1="179.1" x2="1396.77" y2="179.6" stroke="#e27b7b" stroke-width="1.1"/>
<line x1="1396.77" y1="183.2" x2="1396.77" y2="184.6" stroke="#e27b7b" stroke-width="1.1"/>
<rect x="1394.72" y="180.1" width="4.1" height="2.7" fill="#131b2f" stroke="#e27b7b" stroke-width="1.1"/>
<line x1="1402.22" y1="172.9" x2="1402.22" y2="173.6" stroke="#e27b7b" stroke-width="1.1"/>
<line x1="1402.22" y1="179.9" x2="1402.22" y2="184.9" stroke="#e27b7b" stroke-width="1.1"/>
<rect x="1400.17" y="174.1" width="4.1" height="5.3" fill="#131b2f" stroke="#e27b7b" stroke-width="1.1"/>
<line x1="1407.67" y1="171.9" x2="1407.67" y2="186.9" stroke="#84d0f3" stroke-width="1.1"/>
<rect x="1405.07" y="174.9" width="5.2" height="8.7" fill="#84d0f3"/>
<line x1="1413.13" y1="172.4" x2="1413.13" y2="172.9" stroke="#e27b7b" stroke-width="1.1"/>
<line x1="1413.13" y1="184.5" x2="1413.13" y2="184.9" stroke="#e27b7b" stroke-width="1.1"/>
<rect x="1411.08" y="173.4" width="4.1" height="10.6" fill="#131b2f" stroke="#e27b7b" stroke-width="1.1"/>
<line x1="1418.58" y1="165.2" x2="1418.58" y2="166.2" stroke="#e27b7b" stroke-width="1.1"/>
<line x1="1418.58" y1="173.6" x2="1418.58" y2="174.6" stroke="#e27b7b" stroke-width="1.1"/>
<rect x="1416.53" y="166.7" width="4.1" height="6.3" fill="#131b2f" stroke="#e27b7b" stroke-width="1.1"/>
<line x1="1424.03" y1="162.4" x2="1424.03" y2="163.6" stroke="#e27b7b" stroke-width="1.1"/>
<line x1="1424.03" y1="166.9" x2="1424.03" y2="168.2" stroke="#e27b7b" stroke-width="1.1"/>
<rect x="1421.98" y="164.1" width="4.1" height="2.3" fill="#131b2f" stroke="#e27b7b" stroke-width="1.1"/>
<line x1="1429.49" y1="155.3" x2="1429.49" y2="156.3" stroke="#e27b7b" stroke-width="1.1"/>
<line x1="1429.49" y1="164.6" x2="1429.49" y2="165.7" stroke="#e27b7b" stroke-width="1.1"/>
<rect x="1427.44" y="156.8" width="4.1" height="7.3" fill="#131b2f" stroke="#e27b7b" stroke-width="1.1"/>
<line x1="1434.94" y1="157.4" x2="1434.94" y2="162.4" stroke="#84d0f3" stroke-width="1.1"/>
<rect x="1432.34" y="157.9" width="5.2" height="3.7" fill="#84d0f3"/>
<line x1="1440.39" y1="158.3" x2="1440.39" y2="158.8" stroke="#e27b7b" stroke-width="1.1"/>
<line x1="1440.39" y1="160.7" x2="1440.39" y2="171.9" stroke="#e27b7b" stroke-width="1.1"/>
<rect x="1438.35" y="159.3" width="4.1" height="1.0" fill="#131b2f" stroke="#e27b7b" stroke-width="1.1"/>
<line x1="1445.85" y1="152.9" x2="1445.85" y2="153.3" stroke="#e27b7b" stroke-width="1.1"/>
<line x1="1445.85" y1="159.1" x2="1445.85" y2="159.9" stroke="#e27b7b" stroke-width="1.1"/>
<rect x="1443.80" y="153.8" width="4.1" height="4.8" fill="#131b2f" stroke="#e27b7b" stroke-width="1.1"/>
<line x1="1451.30" y1="149.1" x2="1451.30" y2="187.9" stroke="#84d0f3" stroke-width="1.1"/>
<rect x="1448.70" y="154.9" width="5.2" height="9.2" fill="#84d0f3"/>
<line x1="1456.76" y1="161.2" x2="1456.76" y2="162.9" stroke="#e27b7b" stroke-width="1.1"/>
<line x1="1456.76" y1="165.7" x2="1456.76" y2="168.6" stroke="#e27b7b" stroke-width="1.1"/>
<rect x="1454.71" y="163.4" width="4.1" height="1.8" fill="#131b2f" stroke="#e27b7b" stroke-width="1.1"/>
<line x1="1462.21" y1="163.6" x2="1462.21" y2="175.2" stroke="#84d0f3" stroke-width="1.1"/>
<rect x="1459.61" y="164.6" width="5.2" height="7.8" fill="#84d0f3"/>
<line x1="1467.66" y1="157.9" x2="1467.66" y2="161.9" stroke="#e27b7b" stroke-width="1.1"/>
<line x1="1467.66" y1="173.2" x2="1467.66" y2="174.1" stroke="#e27b7b" stroke-width="1.1"/>
<rect x="1465.61" y="162.4" width="4.1" height="10.3" fill="#131b2f" stroke="#e27b7b" stroke-width="1.1"/>
<line x1="1473.12" y1="161.9" x2="1473.12" y2="172.9" stroke="#84d0f3" stroke-width="1.1"/>
<rect x="1470.52" y="163.2" width="5.2" height="8.7" fill="#84d0f3"/>
<line x1="1478.57" y1="163.6" x2="1478.57" y2="168.6" stroke="#e27b7b" stroke-width="1.1"/>
<line x1="1478.57" y1="171.9" x2="1478.57" y2="176.2" stroke="#e27b7b" stroke-width="1.1"/>
<rect x="1476.52" y="169.1" width="4.1" height="2.3" fill="#131b2f" stroke="#e27b7b" stroke-width="1.1"/>
<line x1="1484.02" y1="160.7" x2="1484.02" y2="162.4" stroke="#e27b7b" stroke-width="1.1"/>
<line x1="1484.02" y1="169.1" x2="1484.02" y2="171.9" stroke="#e27b7b" stroke-width="1.1"/>
<rect x="1481.97" y="162.9" width="4.1" height="5.7" fill="#131b2f" stroke="#e27b7b" stroke-width="1.1"/>
<line x1="1489.48" y1="153.6" x2="1489.48" y2="154.1" stroke="#e27b7b" stroke-width="1.1"/>
<line x1="1489.48" y1="163.2" x2="1489.48" y2="164.6" stroke="#e27b7b" stroke-width="1.1"/>
<rect x="1487.43" y="154.6" width="4.1" height="8.2" fill="#131b2f" stroke="#e27b7b" stroke-width="1.1"/>
<line x1="1494.93" y1="154.1" x2="1494.93" y2="158.6" stroke="#84d0f3" stroke-width="1.1"/>
<rect x="1492.33" y="154.6" width="5.2" height="2.3" fill="#84d0f3"/>
<line x1="1500.38" y1="156.3" x2="1500.38" y2="157.4" stroke="#e27b7b" stroke-width="1.1"/>
<line x1="1500.38" y1="159.6" x2="1500.38" y2="160.7" stroke="#e27b7b" stroke-width="1.1"/>
<rect x="1498.33" y="157.9" width="4.1" height="1.2" fill="#131b2f" stroke="#e27b7b" stroke-width="1.1"/>
<line x1="1505.84" y1="153.6" x2="1505.84" y2="154.1" stroke="#e27b7b" stroke-width="1.1"/>
<line x1="1505.84" y1="157.4" x2="1505.84" y2="167.4" stroke="#e27b7b" stroke-width="1.1"/>
<rect x="1503.79" y="154.6" width="4.1" height="2.3" fill="#131b2f" stroke="#e27b7b" stroke-width="1.1"/>
<line x1="1511.29" y1="151.9" x2="1511.29" y2="152.9" stroke="#e27b7b" stroke-width="1.1"/>
<line x1="1511.29" y1="155.3" x2="1511.29" y2="158.6" stroke="#e27b7b" stroke-width="1.1"/>
<rect x="1509.24" y="153.4" width="4.1" height="1.3" fill="#131b2f" stroke="#e27b7b" stroke-width="1.1"/>
<line x1="1516.74" y1="152.4" x2="1516.74" y2="156.6" stroke="#84d0f3" stroke-width="1.1"/>
<rect x="1514.14" y="153.6" width="5.2" height="1.7" fill="#84d0f3"/>
<line x1="1522.20" y1="152.4" x2="1522.20" y2="153.6" stroke="#e27b7b" stroke-width="1.1"/>
<line x1="1522.20" y1="154.9" x2="1522.20" y2="156.3" stroke="#e27b7b" stroke-width="1.1"/>
<rect x="1520.15" y="154.1" width="4.1" height="0.5" fill="#131b2f" stroke="#e27b7b" stroke-width="1.1"/>
<line x1="1527.65" y1="151.6" x2="1527.65" y2="157.9" stroke="#84d0f3" stroke-width="1.1"/>
<rect x="1525.05" y="153.6" width="5.2" height="2.2" fill="#84d0f3"/>
<line x1="1533.10" y1="152.9" x2="1533.10" y2="153.6" stroke="#e27b7b" stroke-width="1.1"/>
<line x1="1533.10" y1="156.3" x2="1533.10" y2="160.7" stroke="#e27b7b" stroke-width="1.1"/>
<rect x="1531.05" y="154.1" width="4.1" height="1.7" fill="#131b2f" stroke="#e27b7b" stroke-width="1.1"/>
<line x1="1538.56" y1="147.4" x2="1538.56" y2="148.3" stroke="#e27b7b" stroke-width="1.1"/>
<line x1="1538.56" y1="153.6" x2="1538.56" y2="154.6" stroke="#e27b7b" stroke-width="1.1"/>
<rect x="1536.51" y="148.8" width="4.1" height="4.3" fill="#131b2f" stroke="#e27b7b" stroke-width="1.1"/>
<line x1="1544.01" y1="140.8" x2="1544.01" y2="146.9" stroke="#e27b7b" stroke-width="1.1"/>
<line x1="1544.01" y1="149.9" x2="1544.01" y2="153.6" stroke="#e27b7b" stroke-width="1.1"/>
<rect x="1541.96" y="147.4" width="4.1" height="2.0" fill="#131b2f" stroke="#e27b7b" stroke-width="1.1"/>
<line x1="1549.46" y1="145.8" x2="1549.46" y2="158.3" stroke="#84d0f3" stroke-width="1.1"/>
<rect x="1546.87" y="146.3" width="5.2" height="10.6" fill="#84d0f3"/>
<line x1="1554.92" y1="153.6" x2="1554.92" y2="167.9" stroke="#84d0f3" stroke-width="1.1"/>
<rect x="1552.32" y="157.4" width="5.2" height="6.7" fill="#84d0f3"/>
<line x1="1560.37" y1="124.1" x2="1560.37" y2="129.6" stroke="#e27b7b" stroke-width="1.1"/>
<line x1="1560.37" y1="164.6" x2="1560.37" y2="165.7" stroke="#e27b7b" stroke-width="1.1"/>
<rect x="1558.32" y="130.1" width="4.1" height="33.9" fill="#131b2f" stroke="#e27b7b" stroke-width="1.1"/>
<line x1="1565.83" y1="129.6" x2="1565.83" y2="143.3" stroke="#84d0f3" stroke-width="1.1"/>
<rect x="1563.23" y="130.3" width="5.2" height="9.7" fill="#84d0f3"/>
<line x1="1571.28" y1="139.1" x2="1571.28" y2="153.6" stroke="#84d0f3" stroke-width="1.1"/>
<rect x="1568.68" y="140.0" width="5.2" height="5.8" fill="#84d0f3"/>
<line x1="1576.73" y1="144.6" x2="1576.73" y2="162.9" stroke="#84d0f3" stroke-width="1.1"/>
<rect x="1574.13" y="145.8" width="5.2" height="14.1" fill="#84d0f3"/>
<line x1="1582.19" y1="149.9" x2="1582.19" y2="150.4" stroke="#e27b7b" stroke-width="1.1"/>
<line x1="1582.19" y1="161.6" x2="1582.19" y2="161.9" stroke="#e27b7b" stroke-width="1.1"/>
<rect x="1580.14" y="150.9" width="4.1" height="10.1" fill="#131b2f" stroke="#e27b7b" stroke-width="1.1"/>
<line x1="1587.64" y1="142.4" x2="1587.64" y2="146.9" stroke="#e27b7b" stroke-width="1.1"/>
<line x1="1587.64" y1="149.9" x2="1587.64" y2="152.9" stroke="#e27b7b" stroke-width="1.1"/>
<rect x="1585.59" y="147.4" width="4.1" height="2.0" fill="#131b2f" stroke="#e27b7b" stroke-width="1.1"/>
<line x1="1593.09" y1="138.0" x2="1593.09" y2="138.6" stroke="#e27b7b" stroke-width="1.1"/>
<line x1="1593.09" y1="147.4" x2="1593.09" y2="148.6" stroke="#e27b7b" stroke-width="1.1"/>
<rect x="1591.04" y="139.1" width="4.1" height="7.8" fill="#131b2f" stroke="#e27b7b" stroke-width="1.1"/>
<line x1="1598.55" y1="133.0" x2="1598.55" y2="133.6" stroke="#e27b7b" stroke-width="1.1"/>
<line x1="1598.55" y1="139.1" x2="1598.55" y2="141.6" stroke="#e27b7b" stroke-width="1.1"/>
<rect x="1596.50" y="134.1" width="4.1" height="4.5" fill="#131b2f" stroke="#e27b7b" stroke-width="1.1"/>
<rect x="1601.4" y="133.2" width="5.4" height="2.6" fill="#f4ea3c"/>
<polyline points="69.8,423.0 103.3,410.0 110.0,407.5" fill="none" stroke="#9c5626" stroke-width="1.0" stroke-linejoin="round" />
<polyline points="753.0,319.1 796.9,320.8 840.5,322.1 884.3,321.6 916.9,320.8 945.0,319.6 969.4,318.3 1034.8,319.0 1101.4,319.1 1135.0,319.8 1150.0,321.3 1167.7,324.5 1185.4,326.6 1203.2,328.0 1220.9,328.9 1238.6,329.2 1256.3,329.2 1274.0,328.7 1291.8,327.5 1309.5,326.2 1328.4,324.8 1344.9,322.7 1362.6,319.8 1380.4,317.4 1398.1,314.5 1415.8,311.5 1433.5,308.9 1450.0,305.8 1468.9,302.6 1496.1,296.3 1523.3,289.8 1550.4,283.5 1577.6,276.7 1603.4,270.8" fill="none" stroke="#9c5626" stroke-width="1.0" stroke-linejoin="round" />
<polyline points="69.8,313.0 103.3,296.0 110.0,292.6" fill="none" stroke="#b348e6" stroke-width="1.4" stroke-linejoin="round" />
<polyline points="753.0,367.4 763.8,369.1 775.0,371.5 785.9,372.9 796.9,374.0 818.7,375.2 840.5,376.5 862.5,377.0 878.8,377.0 895.1,376.2 911.4,374.0 927.9,371.5 945.0,368.2 1101.4,327.8 1113.0,325.3 1124.0,323.3 1140.4,321.9 1162.3,319.7 1184.1,317.4 1194.9,315.3 1216.8,310.1 1238.6,304.8 1260.3,298.7 1282.1,291.7 1304.0,284.7 1320.4,279.5 1330.0,276.0 1360.2,268.0 1387.4,259.9 1482.4,229.8 1495.0,226.5 1505.8,223.5 1516.8,221.1 1527.6,218.5 1538.6,215.7 1549.4,213.2 1560.4,210.7 1571.2,208.2 1582.2,206.2 1593.0,204.0 1604.0,201.8" fill="none" stroke="#b348e6" stroke-width="1.4" stroke-linejoin="round" />
<polyline points="69.8,293.6 103.3,278.6 110.0,275.6" fill="none" stroke="#5566e6" stroke-width="1.3" stroke-linejoin="round" />
<polyline points="753.0,382.4 775.0,382.7 796.9,381.5 818.7,379.5 840.5,376.5 862.5,372.4 884.3,368.2 906.1,362.9 927.9,358.2 945.0,354.1 1080.6,327.8 1091.4,322.8 1102.2,318.1 1113.0,314.5 1124.0,311.2 1140.4,306.9 1162.3,301.0 1184.1,295.7 1205.8,290.5 1227.6,284.7 1249.5,278.6 1271.3,271.6 1293.1,264.6 1314.8,258.5 1330.0,253.8 1343.2,249.8 1364.0,244.8 1385.6,239.0 1407.4,233.2 1420.0,229.8 1429.6,227.3 1440.4,224.8 1451.4,222.3 1462.2,219.8 1473.2,218.2 1484.0,216.5 1495.0,214.5 1505.8,212.3 1516.8,210.7 1527.6,208.2 1538.6,204.8 1549.4,200.7 1560.4,196.2 1571.2,192.4 1582.2,188.5 1593.0,185.2 1604.0,181.9" fill="none" stroke="#5566e6" stroke-width="1.3" stroke-linejoin="round" />
<polyline points="69.8,226.9 79.0,221.9 88.3,216.7 99.1,209.9 110.0,204.4 120.9,200.4 131.9,196.4 142.8,191.9 153.6,188.4 164.5,185.9 169.8,184.9 174.8,184.2 177.8,184.5 187.3,188.6 199.8,196.0 212.2,206.0 222.2,214.8 240.0,231.0" fill="none" stroke="#f0964a" stroke-width="1.0" stroke-linejoin="round" />
<polyline points="753.0,372.4 763.8,375.7 775.0,379.9 780.4,381.2 785.9,381.9 796.9,381.5 807.9,380.2 818.7,378.2 829.7,376.5 835.2,375.2 840.5,371.5 846.0,368.2 851.5,365.7 857.0,364.9 862.5,364.1 867.8,363.2 878.8,359.9 889.8,356.6 895.1,354.9 906.1,351.9 916.9,347.4 927.9,342.4 954.1,327.8 960.0,324.5 969.4,320.3 976.9,317.0 987.7,313.2 998.7,308.7 1009.5,304.2 1020.5,298.7 1031.5,292.9 1042.3,287.5 1053.1,282.0 1064.1,276.2 1074.9,270.4 1085.9,264.6 1096.7,259.6 1107.7,255.4 1113.0,254.3 1118.5,253.8 1120.0,253.8 1135.0,255.0 1151.3,255.9 1167.7,256.3 1178.5,256.8 1189.5,259.4 1200.4,262.0 1211.4,264.3 1222.2,266.4 1233.0,267.8 1244.0,267.3 1249.5,266.0 1254.9,263.2 1260.3,259.4 1265.9,255.6 1271.3,251.5 1276.7,247.5 1282.1,243.7 1287.5,240.2 1293.1,237.0 1298.5,234.1 1304.0,231.1 1309.4,228.3 1314.8,225.9 1325.7,223.2 1331.2,219.9 1342.0,214.0 1353.0,208.5 1364.0,204.0 1374.8,200.7 1385.6,197.9 1396.6,195.7 1407.4,194.1 1410.0,192.9 1418.7,190.7 1429.6,186.5 1440.4,183.2 1451.4,179.9 1462.2,176.6 1473.2,174.1 1484.0,171.6 1495.0,169.1 1505.8,166.6 1516.8,164.1 1527.6,161.9 1538.6,159.9 1549.4,158.6 1560.4,157.4 1571.2,156.3 1582.2,154.9 1593.0,153.3 1604.0,151.3" fill="none" stroke="#f0964a" stroke-width="1.0" stroke-linejoin="round" />
<polyline points="69.0,203.9 71.9,199.9 77.3,189.9 82.8,179.9 88.3,171.0 93.4,167.0 98.8,159.3 104.3,162.2 109.7,162.2 115.2,165.6 120.6,175.0 126.1,185.2 131.6,185.8 137.0,186.5 142.5,185.7 147.9,181.5 153.4,176.2 158.8,178.4 164.3,183.8 169.7,190.7 175.2,194.6 180.6,202.9 182.8,219.9" fill="none" stroke="#a6de72" stroke-width="1.0" stroke-linejoin="round" />
<polyline points="753.0,388.2 758.3,389.9 763.8,386.5 769.5,379.9 775.1,376.2 780.5,374.4 786.0,370.3 791.4,368.0 796.9,367.0 802.3,362.8 807.8,358.3 813.2,357.4 818.7,358.0 824.1,359.0 829.6,361.7 835.1,362.5 840.5,356.7 846.0,348.3 851.4,340.8 856.9,337.9 862.3,337.1 867.8,341.0 873.2,347.5 878.7,350.8 884.1,351.9 889.6,351.1 895.0,348.8 900.5,346.0 906.0,343.1 911.4,334.6 916.9,323.5 922.3,317.6 927.8,311.0 933.2,305.3 938.7,300.4 944.1,297.0 949.6,290.0 955.0,285.3 960.5,282.1 965.9,282.7 971.4,286.0 976.8,287.6 982.3,289.8 987.8,290.1 993.2,287.7 998.7,287.4 1004.1,289.1 1009.6,288.9 1015.0,287.3 1020.5,287.5 1025.9,283.9 1031.4,277.2 1036.8,271.0 1042.3,268.0 1047.7,263.2 1053.2,255.7 1058.7,250.7 1064.1,246.8 1069.6,239.6 1075.0,232.7 1080.5,228.3 1085.9,227.0 1091.4,223.7 1096.8,222.8 1102.3,222.6 1107.7,224.6 1113.2,230.2 1118.6,239.2 1124.1,250.1 1129.5,266.3 1135.0,282.2 1140.5,291.0 1145.9,297.4 1151.4,300.9 1156.8,297.7 1162.3,292.2 1167.7,284.3 1173.2,277.4 1178.6,272.3 1184.1,271.1 1189.5,272.5 1195.0,274.2 1200.4,272.1 1205.9,265.7 1211.3,257.4 1216.8,249.5 1222.3,247.8 1227.7,247.5 1233.2,247.5 1238.6,246.5 1244.1,240.7 1249.5,232.5 1255.0,224.5 1260.4,218.5 1265.9,211.6 1271.3,208.9 1276.8,207.8 1282.2,205.8 1287.7,205.2 1293.2,209.3 1298.6,209.4 1304.1,206.5 1309.5,205.6 1315.0,205.4 1320.4,201.9 1325.9,202.5 1331.3,203.2 1336.8,203.5 1342.2,198.8 1347.7,194.8 1353.1,190.1 1358.6,185.9 1364.0,185.7 1369.5,187.5 1375.0,188.0 1380.4,187.4 1385.9,187.2 1391.3,184.6 1396.8,182.4 1402.2,180.2 1407.7,180.0 1413.1,178.6 1418.6,175.2 1424.0,172.0 1429.5,168.5 1434.9,164.1 1440.4,161.3 1445.8,158.7 1451.3,158.8 1456.8,160.1 1462.2,162.3 1467.7,162.9 1473.1,166.6 1478.6,167.5 1484.0,167.4 1489.5,163.8 1494.9,162.8 1500.4,159.9 1505.8,157.0 1511.3,155.1 1516.7,155.3 1522.2,154.7 1527.7,154.3 1533.1,154.2 1538.6,153.3 1544.0,151.6 1549.5,152.3 1554.9,154.0 1560.4,149.2 1565.8,147.5 1571.3,147.3 1576.7,147.9 1582.2,145.1 1587.6,148.6 1593.1,148.3 1598.5,145.9 1604.0,140.8" fill="none" stroke="#a6de72" stroke-width="1.0" stroke-linejoin="round" />
</g>
<rect x="101.6" y="120.2" width="6" height="6" fill="#f07272"/>
<text x="103.4" y="103.8" fill="#f07272" class="ax">10/21</text>
<text x="103.4" y="117.8" fill="#f07272" class="ax">151.945</text>
<rect x="1082.9" y="210.5" width="6" height="6" fill="#f07272"/>
<text x="1084.3" y="194.0" fill="#f07272" class="ax">06/30</text>
<text x="1084.3" y="208.0" fill="#f07272" class="ax">145.069</text>
<rect x="1557.4" y="123.2" width="6" height="6" fill="#f07272"/>
<text x="1559.8" y="106.8" fill="#f07272" class="ax">10/31</text>
<text x="1559.8" y="120.8" fill="#f07272" class="ax">151.710</text>
<rect x="1137.5" y="319.2" width="6" height="6" fill="#84c9ee"/>
<text x="1139.3" y="336.8" fill="#84c9ee" class="ax">07/14</text>
<text x="1139.3" y="350.8" fill="#84c9ee" class="ax">137.240</text>
<text x="67.6" y="90.7" text-anchor="end" fill="#9a9fa9" class="ax" clip-path="url(#ct)">155.00</text>
<text x="1662.6" y="90.7" fill="#9a9fa9" class="ax" clip-path="url(#ct)">155.00</text>
<text x="67.6" y="156.7" text-anchor="end" fill="#9a9fa9" class="ax">150.00</text>
<text x="1662.6" y="156.7" fill="#9a9fa9" class="ax">150.00</text>
<text x="67.6" y="222.7" text-anchor="end" fill="#9a9fa9" class="ax">145.00</text>
<text x="1662.6" y="222.7" fill="#9a9fa9" class="ax">145.00</text>
<text x="67.6" y="287.7" text-anchor="end" fill="#9a9fa9" class="ax">140.00</text>
<text x="1662.6" y="287.7" fill="#9a9fa9" class="ax">140.00</text>
<text x="67.6" y="353.7" text-anchor="end" fill="#9a9fa9" class="ax">135.00</text>
<text x="1662.6" y="353.7" fill="#9a9fa9" class="ax">135.00</text>
<text x="67.6" y="419.7" text-anchor="end" fill="#9a9fa9" class="ax">130.00</text>
<text x="1662.6" y="419.7" fill="#9a9fa9" class="ax">130.00</text>
<text x="66.5" y="510.0" text-anchor="end" fill="#9a9fa9" class="ax">4</text>
<text x="1663" y="510.0" fill="#9a9fa9" class="ax">4</text>
<text x="66.5" y="538.0" text-anchor="end" fill="#9a9fa9" class="ax">2</text>
<text x="1663" y="538.0" fill="#9a9fa9" class="ax">2</text>
<text x="66.5" y="567.0" text-anchor="end" fill="#9a9fa9" class="ax">0</text>
<text x="1663" y="567.0" fill="#9a9fa9" class="ax">0</text>
<text x="66.5" y="595.5" text-anchor="end" fill="#9a9fa9" class="ax">-2</text>
<text x="1663" y="595.5" fill="#9a9fa9" class="ax">-2</text>
<text x="66.5" y="624.0" text-anchor="end" fill="#9a9fa9" class="ax">-4</text>
<text x="1663" y="624.0" fill="#9a9fa9" class="ax">-4</text>
<text x="66.5" y="665.0" text-anchor="end" fill="#9a9fa9" class="ax">80</text>
<text x="1663" y="665.0" fill="#9a9fa9" class="ax">80</text>
<text x="66.5" y="694.0" text-anchor="end" fill="#9a9fa9" class="ax">60</text>
<text x="1663" y="694.0" fill="#9a9fa9" class="ax">60</text>
<text x="66.5" y="722.0" text-anchor="end" fill="#9a9fa9" class="ax">40</text>
<text x="1663" y="722.0" fill="#9a9fa9" class="ax">40</text>
<text x="71.5" y="511" fill="#9a9fa9" class="ax">MACD</text>
<text x="71" y="645" fill="#9a9fa9" class="ax">RSI</text>
<text x="258" y="82.6" text-anchor="middle" fill="#9a9fa9" class="ax">2022/12</text>
<text x="609" y="82.6" text-anchor="middle" fill="#9a9fa9" class="ax">2023/03</text>
<text x="968" y="82.6" text-anchor="middle" fill="#9a9fa9" class="ax">2023/06</text>
<text x="1328" y="82.6" text-anchor="middle" fill="#9a9fa9" class="ax">2023/09</text>
<rect x="522" y="68" width="80" height="17.5" fill="#dfdfdf"/><text x="525.5" y="81.5" fill="#151a28" class="ax" style="letter-spacing:.6px">2023/02/07</text>
<rect x="14" y="467.5" width="57" height="17.5" fill="#dfdfdf"/><text x="22" y="481" fill="#151a28" class="ax">125.261</text>
<rect x="1659" y="467.5" width="40" height="17.5" fill="#dfdfdf"/><text x="1663" y="481" fill="#151a28" class="ax">125.261</text>
<rect x="751.15" y="561.2" width="4.2" height="1.3" fill="#b535a3"/>
<rect x="756.61" y="559.5" width="4.2" height="3.0" fill="#b535a3"/>
<rect x="762.06" y="555.6" width="4.2" height="6.9" fill="#b535a3"/>
<rect x="767.51" y="553.4" width="4.2" height="9.1" fill="#b535a3"/>
<rect x="772.97" y="555.1" width="4.2" height="7.4" fill="#b535a3"/>
<rect x="778.42" y="558.4" width="4.2" height="4.1" fill="#b535a3"/>
<rect x="783.88" y="556.7" width="4.2" height="5.8" fill="#b535a3"/>
<rect x="789.33" y="554.2" width="4.2" height="8.3" fill="#b535a3"/>
<rect x="794.78" y="555.6" width="4.2" height="6.9" fill="#b535a3"/>
<rect x="800.24" y="555.1" width="4.2" height="7.4" fill="#b535a3"/>
<rect x="805.69" y="557.2" width="4.2" height="5.3" fill="#b535a3"/>
<rect x="811.14" y="559.2" width="4.2" height="3.3" fill="#b535a3"/>
<rect x="816.60" y="560.2" width="4.2" height="2.3" fill="#b535a3"/>
<rect x="822.05" y="562.2" width="4.2" height="0.3" fill="#b535a3"/>
<rect x="827.50" y="562.5" width="4.2" height="1.7" fill="#5334b4"/>
<rect x="832.96" y="562.5" width="4.2" height="1.7" fill="#5334b4"/>
<rect x="838.41" y="557.9" width="4.2" height="4.6" fill="#b535a3"/>
<rect x="843.86" y="552.9" width="4.2" height="9.6" fill="#b535a3"/>
<rect x="849.32" y="553.2" width="4.2" height="9.3" fill="#b535a3"/>
<rect x="854.77" y="560.0" width="4.2" height="2.5" fill="#b535a3"/>
<rect x="860.22" y="562.5" width="4.2" height="3.0" fill="#5334b4"/>
<rect x="865.68" y="562.5" width="4.2" height="4.1" fill="#5334b4"/>
<rect x="871.13" y="562.5" width="4.2" height="3.6" fill="#5334b4"/>
<rect x="876.58" y="562.5" width="4.2" height="3.3" fill="#5334b4"/>
<rect x="882.04" y="562.5" width="4.2" height="5.5" fill="#5334b4"/>
<rect x="887.49" y="562.5" width="4.2" height="5.5" fill="#5334b4"/>
<rect x="892.94" y="562.5" width="4.2" height="2.0" fill="#5334b4"/>
<rect x="898.40" y="561.7" width="4.2" height="0.8" fill="#b535a3"/>
<rect x="903.85" y="560.0" width="4.2" height="2.5" fill="#b535a3"/>
<rect x="909.31" y="556.2" width="4.2" height="6.3" fill="#b535a3"/>
<rect x="914.76" y="552.6" width="4.2" height="9.9" fill="#b535a3"/>
<rect x="920.21" y="553.9" width="4.2" height="8.6" fill="#b535a3"/>
<rect x="925.67" y="554.2" width="4.2" height="8.3" fill="#b535a3"/>
<rect x="931.12" y="555.9" width="4.2" height="6.6" fill="#b535a3"/>
<rect x="936.57" y="555.1" width="4.2" height="7.4" fill="#b535a3"/>
<rect x="942.03" y="554.7" width="4.2" height="7.8" fill="#b535a3"/>
<rect x="947.48" y="554.6" width="4.2" height="7.9" fill="#b535a3"/>
<rect x="952.93" y="556.2" width="4.2" height="6.3" fill="#b535a3"/>
<rect x="958.39" y="560.0" width="4.2" height="2.5" fill="#b535a3"/>
<rect x="963.84" y="562.5" width="4.2" height="1.7" fill="#5334b4"/>
<rect x="969.29" y="562.5" width="4.2" height="5.8" fill="#5334b4"/>
<rect x="974.75" y="562.5" width="4.2" height="4.6" fill="#5334b4"/>
<rect x="980.20" y="562.5" width="4.2" height="5.0" fill="#5334b4"/>
<rect x="985.65" y="562.5" width="4.2" height="5.3" fill="#5334b4"/>
<rect x="991.11" y="562.5" width="4.2" height="3.6" fill="#5334b4"/>
<rect x="996.56" y="562.5" width="4.2" height="6.9" fill="#5334b4"/>
<rect x="1002.01" y="562.5" width="4.2" height="6.6" fill="#5334b4"/>
<rect x="1007.47" y="562.5" width="4.2" height="5.8" fill="#5334b4"/>
<rect x="1012.92" y="562.5" width="4.2" height="3.3" fill="#5334b4"/>
<rect x="1018.38" y="562.5" width="4.2" height="2.5" fill="#5334b4"/>
<rect x="1023.83" y="562.5" width="4.2" height="2.0" fill="#5334b4"/>
<rect x="1029.28" y="560.0" width="4.2" height="2.5" fill="#b535a3"/>
<rect x="1034.74" y="557.9" width="4.2" height="4.6" fill="#b535a3"/>
<rect x="1040.19" y="559.5" width="4.2" height="3.0" fill="#b535a3"/>
<rect x="1045.64" y="559.5" width="4.2" height="3.0" fill="#b535a3"/>
<rect x="1051.10" y="557.2" width="4.2" height="5.3" fill="#b535a3"/>
<rect x="1056.55" y="555.6" width="4.2" height="6.9" fill="#b535a3"/>
<rect x="1062.00" y="556.2" width="4.2" height="6.3" fill="#b535a3"/>
<rect x="1067.46" y="556.2" width="4.2" height="6.3" fill="#b535a3"/>
<rect x="1072.91" y="556.4" width="4.2" height="6.1" fill="#b535a3"/>
<rect x="1078.36" y="556.7" width="4.2" height="5.8" fill="#b535a3"/>
<rect x="1083.82" y="560.0" width="4.2" height="2.5" fill="#b535a3"/>
<rect x="1089.27" y="561.7" width="4.2" height="0.8" fill="#b535a3"/>
<rect x="1094.72" y="562.5" width="4.2" height="0.5" fill="#5334b4"/>
<rect x="1100.18" y="562.5" width="4.2" height="2.0" fill="#5334b4"/>
<rect x="1105.63" y="562.5" width="4.2" height="4.6" fill="#5334b4"/>
<rect x="1111.09" y="562.5" width="4.2" height="11.2" fill="#5334b4"/>
<rect x="1116.54" y="562.5" width="4.2" height="16.5" fill="#5334b4"/>
<rect x="1121.99" y="562.5" width="4.2" height="19.8" fill="#5334b4"/>
<rect x="1127.45" y="562.5" width="4.2" height="25.1" fill="#5334b4"/>
<rect x="1132.90" y="562.5" width="4.2" height="24.8" fill="#5334b4"/>
<rect x="1138.35" y="562.5" width="4.2" height="22.3" fill="#5334b4"/>
<rect x="1143.81" y="562.5" width="4.2" height="18.2" fill="#5334b4"/>
<rect x="1149.26" y="562.5" width="4.2" height="14.1" fill="#5334b4"/>
<rect x="1154.71" y="562.5" width="4.2" height="7.4" fill="#5334b4"/>
<rect x="1160.17" y="562.5" width="4.2" height="2.0" fill="#5334b4"/>
<rect x="1165.62" y="556.7" width="4.2" height="5.8" fill="#b535a3"/>
<rect x="1171.07" y="554.2" width="4.2" height="8.3" fill="#b535a3"/>
<rect x="1176.53" y="555.1" width="4.2" height="7.4" fill="#b535a3"/>
<rect x="1181.98" y="557.9" width="4.2" height="4.6" fill="#b535a3"/>
<rect x="1187.43" y="562.0" width="4.2" height="0.5" fill="#b535a3"/>
<rect x="1192.89" y="559.2" width="4.2" height="3.3" fill="#b535a3"/>
<rect x="1198.34" y="554.6" width="4.2" height="7.9" fill="#b535a3"/>
<rect x="1203.79" y="550.6" width="4.2" height="11.9" fill="#b535a3"/>
<rect x="1209.25" y="549.6" width="4.2" height="12.9" fill="#b535a3"/>
<rect x="1214.70" y="552.9" width="4.2" height="9.6" fill="#b535a3"/>
<rect x="1220.16" y="557.5" width="4.2" height="5.0" fill="#b535a3"/>
<rect x="1225.61" y="558.9" width="4.2" height="3.6" fill="#b535a3"/>
<rect x="1231.06" y="557.5" width="4.2" height="5.0" fill="#b535a3"/>
<rect x="1236.52" y="556.2" width="4.2" height="6.3" fill="#b535a3"/>
<rect x="1241.97" y="553.9" width="4.2" height="8.6" fill="#b535a3"/>
<rect x="1247.42" y="553.4" width="4.2" height="9.1" fill="#b535a3"/>
<rect x="1252.88" y="552.9" width="4.2" height="9.6" fill="#b535a3"/>
<rect x="1258.33" y="553.9" width="4.2" height="8.6" fill="#b535a3"/>
<rect x="1263.78" y="553.9" width="4.2" height="8.6" fill="#b535a3"/>
<rect x="1269.24" y="556.2" width="4.2" height="6.3" fill="#b535a3"/>
<rect x="1274.69" y="560.0" width="4.2" height="2.5" fill="#b535a3"/>
<rect x="1280.14" y="560.5" width="4.2" height="2.0" fill="#b535a3"/>
<rect x="1291.05" y="562.5" width="4.2" height="4.1" fill="#5334b4"/>
<rect x="1296.50" y="562.5" width="4.2" height="3.4" fill="#5334b4"/>
<rect x="1301.96" y="562.5" width="4.2" height="1.5" fill="#5334b4"/>
<rect x="1307.41" y="562.5" width="4.2" height="0.9" fill="#5334b4"/>
<rect x="1312.86" y="562.5" width="4.2" height="2.8" fill="#5334b4"/>
<rect x="1318.32" y="562.5" width="4.2" height="2.8" fill="#5334b4"/>
<rect x="1323.77" y="562.5" width="4.2" height="5.3" fill="#5334b4"/>
<rect x="1329.23" y="562.5" width="4.2" height="4.2" fill="#5334b4"/>
<rect x="1334.68" y="562.5" width="4.2" height="2.8" fill="#5334b4"/>
<rect x="1340.13" y="561.9" width="4.2" height="0.6" fill="#b535a3"/>
<rect x="1345.59" y="560.2" width="4.2" height="2.3" fill="#b535a3"/>
<rect x="1351.04" y="561.6" width="4.2" height="0.9" fill="#b535a3"/>
<rect x="1356.49" y="561.6" width="4.2" height="0.9" fill="#b535a3"/>
<rect x="1361.95" y="562.5" width="4.2" height="2.3" fill="#5334b4"/>
<rect x="1367.40" y="562.5" width="4.2" height="3.4" fill="#5334b4"/>
<rect x="1372.85" y="562.5" width="4.2" height="2.3" fill="#5334b4"/>
<rect x="1378.31" y="562.5" width="4.2" height="1.9" fill="#5334b4"/>
<rect x="1383.76" y="562.5" width="4.2" height="0.9" fill="#5334b4"/>
<rect x="1389.21" y="562.5" width="4.2" height="0.9" fill="#5334b4"/>
<rect x="1394.67" y="562.5" width="4.2" height="0.9" fill="#5334b4"/>
<rect x="1400.12" y="562.5" width="4.2" height="0.4" fill="#5334b4"/>
<rect x="1405.57" y="562.5" width="4.2" height="1.9" fill="#5334b4"/>
<rect x="1411.03" y="562.5" width="4.2" height="0.6" fill="#5334b4"/>
<rect x="1416.48" y="561.6" width="4.2" height="0.9" fill="#b535a3"/>
<rect x="1421.93" y="560.6" width="4.2" height="1.9" fill="#b535a3"/>
<rect x="1427.39" y="559.1" width="4.2" height="3.4" fill="#b535a3"/>
<rect x="1432.84" y="560.2" width="4.2" height="2.3" fill="#b535a3"/>
<rect x="1438.30" y="561.6" width="4.2" height="0.9" fill="#b535a3"/>
<rect x="1443.75" y="561.0" width="4.2" height="1.5" fill="#b535a3"/>
<rect x="1454.66" y="562.5" width="4.2" height="1.9" fill="#5334b4"/>
<rect x="1460.11" y="562.5" width="4.2" height="4.7" fill="#5334b4"/>
<rect x="1465.56" y="562.5" width="4.2" height="3.4" fill="#5334b4"/>
<rect x="1471.02" y="562.5" width="4.2" height="5.3" fill="#5334b4"/>
<rect x="1476.47" y="562.5" width="4.2" height="5.3" fill="#5334b4"/>
<rect x="1481.92" y="562.5" width="4.2" height="3.4" fill="#5334b4"/>
<rect x="1487.38" y="562.5" width="4.2" height="0.6" fill="#5334b4"/>
<rect x="1520.10" y="562.5" width="4.2" height="0.4" fill="#5334b4"/>
<rect x="1525.55" y="562.5" width="4.2" height="0.6" fill="#5334b4"/>
<rect x="1531.00" y="562.5" width="4.2" height="0.6" fill="#5334b4"/>
<rect x="1547.37" y="562.5" width="4.2" height="0.9" fill="#5334b4"/>
<rect x="1552.82" y="562.5" width="4.2" height="4.2" fill="#5334b4"/>
<rect x="1558.27" y="560.6" width="4.2" height="1.9" fill="#b535a3"/>
<rect x="1563.73" y="560.2" width="4.2" height="2.3" fill="#b535a3"/>
<rect x="1569.18" y="561.9" width="4.2" height="0.6" fill="#b535a3"/>
<rect x="1574.63" y="562.5" width="4.2" height="2.8" fill="#5334b4"/>
<rect x="1580.09" y="562.5" width="4.2" height="2.8" fill="#5334b4"/>
<rect x="1585.54" y="562.5" width="4.2" height="1.5" fill="#5334b4"/>
<rect x="1596.45" y="561.0" width="4.2" height="1.5" fill="#b535a3"/>
<rect x="1601.90" y="560.2" width="4.2" height="2.3" fill="#b535a3"/>
<rect x="69.47" y="560.0" width="4.2" height="2.5" fill="#b535a3"/>
<rect x="74.92" y="556.7" width="4.2" height="5.8" fill="#b535a3"/>
<rect x="80.37" y="554.5" width="4.2" height="8.0" fill="#b535a3"/>
<rect x="85.83" y="553.5" width="4.2" height="9.0" fill="#b535a3"/>
<rect x="91.28" y="553.9" width="4.2" height="8.6" fill="#b535a3"/>
<rect x="96.73" y="554.5" width="4.2" height="8.0" fill="#b535a3"/>
<polyline points="69.8,542.2 83.2,536.4 96.0,531.6 103.0,531.0 108.0,531.0" fill="none" stroke="#f0964a" stroke-width="1.0" stroke-linejoin="round" />
<polyline points="752.9,573.3 763.7,570.4 774.8,567.1 785.7,564.3 796.6,560.5 807.5,557.2 818.3,555.2 829.2,555.1 834.6,555.2 839.9,554.2 845.4,551.8 850.9,549.4 856.3,549.1 861.8,549.8 872.5,551.1 883.4,553.6 888.9,554.7 894.2,555.2 899.6,554.7 905.1,553.9 910.4,552.3 915.9,549.8 926.8,545.6 937.7,541.5 948.4,537.4 953.9,536.0 959.4,535.4 964.8,536.2 970.3,537.4 981.0,539.8 991.9,542.3 1002.7,545.6 1013.6,547.8 1020.0,548.4 1030.9,547.3 1041.8,545.6 1052.7,543.7 1063.7,540.2 1074.6,537.4 1085.5,535.7 1096.4,535.7 1101.9,536.2 1107.3,537.4 1112.8,540.7 1118.2,544.8 1123.7,550.6 1129.2,556.7 1134.6,563.3 1140.1,568.8 1145.5,572.9 1151.0,575.9 1156.5,577.1 1161.9,577.6 1167.4,575.4 1172.8,573.8 1178.3,572.1 1183.7,570.4 1189.2,569.6 1194.7,568.8 1200.1,567.1 1205.6,563.8 1211.0,561.3 1216.5,558.9 1222.0,557.2 1227.4,556.1 1232.9,554.7 1238.3,553.1 1243.8,550.6 1249.2,548.1 1254.7,545.6 1260.2,543.2 1265.6,541.5 1271.1,540.2 1276.5,539.8 1282.0,539.5 1287.4,539.8 1292.9,540.7 1295.0,541.0 1308.2,542.7 1320.5,544.2 1332.8,546.6 1347.0,546.6 1357.4,546.1 1369.7,547.4 1383.8,548.5 1400.9,548.9 1414.1,549.3 1429.2,547.4 1445.3,546.6 1457.6,548.0 1472.7,550.8 1482.1,553.1 1489.7,553.6 1508.6,553.1 1527.5,554.0 1542.6,553.6 1554.9,555.0 1566.3,554.6 1577.6,554.6 1589.0,555.5 1595.6,555.5 1604.1,554.6" fill="none" stroke="#f0964a" stroke-width="1.0" stroke-linejoin="round" />
<polyline points="69.8,539.6 75.2,534.8 82.6,529.0 91.2,525.2 97.6,523.6 100.8,525.8 103.0,530.0 108.0,545.0" fill="none" stroke="#a6de72" stroke-width="1.0" stroke-linejoin="round" />
<polyline points="752.9,571.6 758.2,569.6 763.7,564.3 769.3,559.7 774.8,558.4 780.2,560.2 785.7,557.7 791.1,553.9 796.6,552.6 802.1,550.3 807.5,550.9 813.0,551.8 818.3,552.6 823.7,555.1 829.2,557.2 834.6,557.7 839.9,551.4 845.4,541.5 850.9,540.2 856.3,546.5 861.8,552.3 867.1,554.4 872.5,554.7 878.0,555.1 883.4,558.4 888.9,559.9 894.2,556.7 899.6,553.9 905.1,551.1 910.4,545.6 915.9,539.8 921.3,539.0 926.8,537.4 932.2,536.5 937.7,534.6 943.1,531.9 948.4,529.6 953.9,529.6 959.4,532.4 964.8,536.5 970.3,543.2 975.6,543.7 981.0,544.8 986.5,546.5 991.9,545.6 997.4,549.8 1002.7,552.3 1008.1,552.7 1013.6,551.4 1019.1,551.1 1020.0,551.1 1025.5,550.6 1030.9,545.6 1036.4,542.3 1041.8,543.2 1047.3,542.3 1052.7,538.2 1058.2,535.2 1063.7,534.6 1069.1,532.9 1074.6,531.6 1080.0,531.2 1085.5,533.2 1091.0,534.6 1096.4,536.2 1101.9,537.4 1107.3,540.7 1112.8,548.1 1118.2,558.9 1123.7,570.4 1129.2,581.5 1134.6,587.0 1140.1,589.1 1145.5,589.5 1151.0,588.6 1156.5,584.5 1161.9,579.5 1167.4,569.6 1172.8,565.5 1178.3,564.3 1183.7,566.3 1189.2,569.3 1194.7,564.7 1200.1,557.2 1205.6,551.4 1211.0,548.1 1216.5,549.4 1222.0,552.3 1227.4,552.3 1232.9,549.8 1238.3,547.3 1243.8,543.2 1249.2,540.2 1254.7,537.4 1260.2,535.7 1265.6,533.6 1271.1,534.9 1276.5,537.4 1282.0,537.4 1287.4,540.7 1292.9,545.1 1295.0,545.1 1301.6,543.6 1308.2,543.6 1314.8,546.6 1320.5,547.4 1326.2,550.2 1332.8,550.2 1336.6,549.8 1342.3,546.1 1347.0,544.2 1351.7,544.6 1357.4,544.2 1364.0,548.5 1369.7,549.8 1376.3,549.8 1383.8,550.4 1393.3,550.4 1400.9,548.9 1407.5,551.2 1414.1,550.4 1421.7,548.0 1429.2,544.7 1436.8,545.1 1445.3,544.7 1451.9,548.0 1457.6,550.4 1462.3,553.1 1467.0,553.1 1472.7,555.5 1477.4,557.4 1482.1,556.8 1489.7,553.6 1499.2,553.6 1508.6,553.1 1518.1,553.6 1527.5,554.6 1535.1,554.2 1542.6,553.1 1549.3,556.1 1554.9,559.9 1560.6,552.7 1566.3,551.4 1571.9,552.7 1577.6,557.4 1583.3,558.4 1589.0,557.4 1595.6,554.6 1600.3,552.7 1604.1,552.1" fill="none" stroke="#a6de72" stroke-width="1.0" stroke-linejoin="round" />
<g clip-path="url(#cr)">
<polyline points="69.8,660.6 76.8,661.2 82.6,659.6 89.0,645.8 99.2,646.2 103.0,670.8 108.0,700.0" fill="none" stroke="#a6de72" stroke-width="1.0" stroke-linejoin="round" />
<polyline points="753.0,704.5 758.8,697.0 764.1,694.9 769.8,684.3 775.1,683.4 780.4,688.2 786.1,686.4 791.6,675.4 796.9,691.4 802.2,686.0 807.9,691.4 813.2,688.2 819.1,678.9 824.4,681.4 829.7,684.6 835.4,685.5 840.7,679.3 846.0,674.0 851.3,677.5 857.0,688.2 862.5,699.2 867.8,700.6 873.1,695.8 878.8,699.2 884.1,702.3 890.0,700.2 895.3,694.4 900.6,687.8 905.9,685.5 911.2,681.4 916.9,687.3 922.2,699.7 927.5,689.0 932.8,670.4 938.7,659.5 944.4,659.5 949.7,658.4 955.0,661.2 960.3,658.4 966.0,665.1 971.3,676.6 976.8,672.6 982.5,678.9 987.8,685.5 993.1,689.9 998.8,694.9 1004.1,696.1 1009.6,694.4 1014.9,696.1 1020.6,702.0 1025.9,706.4 1030.0,695.3 1032.7,688.2 1036.7,682.8 1042.1,683.7 1047.7,675.4 1053.0,674.3 1058.4,666.5 1064.0,669.6 1069.3,669.6 1074.7,649.2 1080.5,649.5 1085.8,658.0 1091.1,659.5 1096.5,661.2 1102.1,661.2 1107.4,678.4 1112.9,702.0 1118.3,704.5 1122.1,711.2 1125.7,720.9 1139.9,759.0 1175.3,759.0 1189.5,720.9 1194.8,704.1 1200.5,690.8 1205.8,670.4 1211.1,666.4 1216.4,677.5 1222.8,683.2 1228.1,680.7 1233.4,680.5 1238.8,680.7 1244.1,683.7 1249.7,680.2 1255.1,673.1 1260.4,665.5 1265.7,655.4 1271.0,666.9 1276.7,676.3 1282.0,677.9 1287.8,682.0 1293.2,683.7 1298.5,670.4 1303.8,671.3 1309.5,675.4 1314.8,684.3 1320.0,689.0 1326.2,697.9 1331.5,697.0 1336.8,695.8 1342.2,692.6 1347.5,688.2 1352.8,686.9 1358.5,689.6 1363.9,697.4 1369.3,684.3 1374.9,688.2 1380.6,693.1 1385.9,690.8 1391.4,685.5 1396.7,686.4 1402.0,673.1 1407.7,689.0 1413.0,685.2 1418.7,690.5 1424.0,688.2 1429.5,678.9 1434.8,687.3 1440.5,667.8 1445.8,667.4 1451.5,684.3 1456.8,683.2 1462.1,695.6 1467.4,686.0 1473.3,696.7 1478.6,699.3 1484.3,686.4 1489.6,687.8 1495.1,695.3 1500.4,697.9 1506.1,701.5 1511.4,694.9 1516.7,697.4 1522.4,703.2 1527.7,693.1 1533.0,691.4 1538.3,674.9 1544.2,682.0 1549.5,681.6 1554.8,697.0 1560.5,674.9 1565.8,690.8 1571.1,694.0 1577.0,704.6 1582.3,701.5 1587.6,699.2 1593.3,694.0 1598.6,691.7 1604.1,690.3" fill="none" stroke="#a6de72" stroke-width="1.0" stroke-linejoin="round" />
</g></svg>
<div id="pop">
<div class="tb"></div>
<svg class="tt" width="80" height="16" viewBox="0 0 80 16"><text x="4.6" y="13" textLength="65" lengthAdjust="spacing">ニュース本文</text></svg>
<svg class="x" width="9" height="9" viewBox="0 0 9 9"><path d="M1 1L8 8M8 1L1 8" stroke="#fff" stroke-width="1.6" fill="none"/></svg>
<div class="in"></div>
<svg class="hd" width="520" height="20" viewBox="0 0 520 20"><text x="0.5" y="13.2" textLength="141.8" lengthAdjust="spacing" class="h1">2023/11/10 14:09:00</text><text x="160" y="13.2" textLength="165.5" lengthAdjust="spacing" class="h2">ドル円リアルタイムオーダー＝</text><text x="326.3" y="13.2" textLength="56.7" lengthAdjust="spacing" class="h1">151.00円</text><text x="397" y="13.2" textLength="97.5" lengthAdjust="spacing" class="h1">OP10日NYカット</text></svg>
<div id="sb"><div class="up"></div><div class="th"></div></div>
<div class="bd">
<div class="ln"><span class="a">153.00</span>円　売り小さめ・超えるとストップロス買い小さめ</div>
<div class="ln"><span class="a">152.50</span>円　売り小さめ</div>
<div class="ln"><span class="a">152.20</span>円　売り小さめ</div>
<div class="ln"><span class="a">152.00</span>円　売りやや小さめ、<span class="a">OP13</span>日<span class="a">NY</span>カット<span class="a">/15</span>日<span class="a">NY</span>カット大きめ</div>
<div class="ln"><span class="a">151.70</span>円　売り</div>
<div class="ln"><span class="a">151.50</span>円　売り</div>
<div class="ln"><span class="a">151.40</span>円　売りやや小さめ</div>
<div class="ln">&nbsp;</div>
<div class="ln"><span class="a">151.36</span>円　<span class="a">11/10</span>　<span class="a">14:09</span>現在（高値<span class="a">151.38</span>円<span class="a"> - </span>安値<span class="a">151.22</span>円）</div>
<div class="ln">&nbsp;</div>
<div class="ln"><span class="a">151.27</span>円　<span class="a">OP15</span>日<span class="a">NY</span>カット</div>
<div class="ln"><span class="a">151.00</span>円　<span class="a">OP10</span>日<span class="a">NY</span>カット</div>
<div class="ln"><span class="a">150.70</span>円　買い・割り込むとストップロス売り</div>
<div class="ln"><span class="a">150.50</span>円　<span class="a">OP15</span>日<span class="a">NY</span>カット</div>
<div class="ln"><span class="a">150.20-30</span>円　ストップロス売り</div>
<div class="ln"><span class="a">150.00</span>円　<span class="a">OP10</span>・<span class="a">13</span>・<span class="a">16</span>日<span class="a">NY</span>カット大きめ<span class="a">/OP14</span>・<span class="a">15</span>日<span class="a">NY</span>カット</div>
<div class="ln"><span class="a">149.50</span>円　<span class="a">OP13</span>・<span class="a">16</span>日<span class="a">NY</span>カット</div>
<div class="ln"><span class="a">149.00</span>円　買い、<span class="a">OP15</span>日<span class="a">NY</span>カット<span class="a">/16</span>日<span class="a">NY</span>カット大きめ</div>
<div class="ln"><span class="a">148.95</span>円　<span class="a">OP16</span>日<span class="a">NY</span>カット</div>
<div class="ln"><span class="a">148.90</span>円　<span class="a">OP15</span>・<span class="a">16</span>日<span class="a">NY</span>カット</div>
<div class="ln"><span class="a">148.75</span>円　<span class="a">OP15</span>日<span class="a">NY</span>カット</div>
<div class="ln"><span class="a">148.70</span>円　<span class="a">OP13</span>日<span class="a">NY</span>カット</div>
<div class="ln"><span class="a">148.00</span>円　<span class="a">OP16</span>日<span class="a">NY</span>カット</div>
</div>
</div>
</body></html>
